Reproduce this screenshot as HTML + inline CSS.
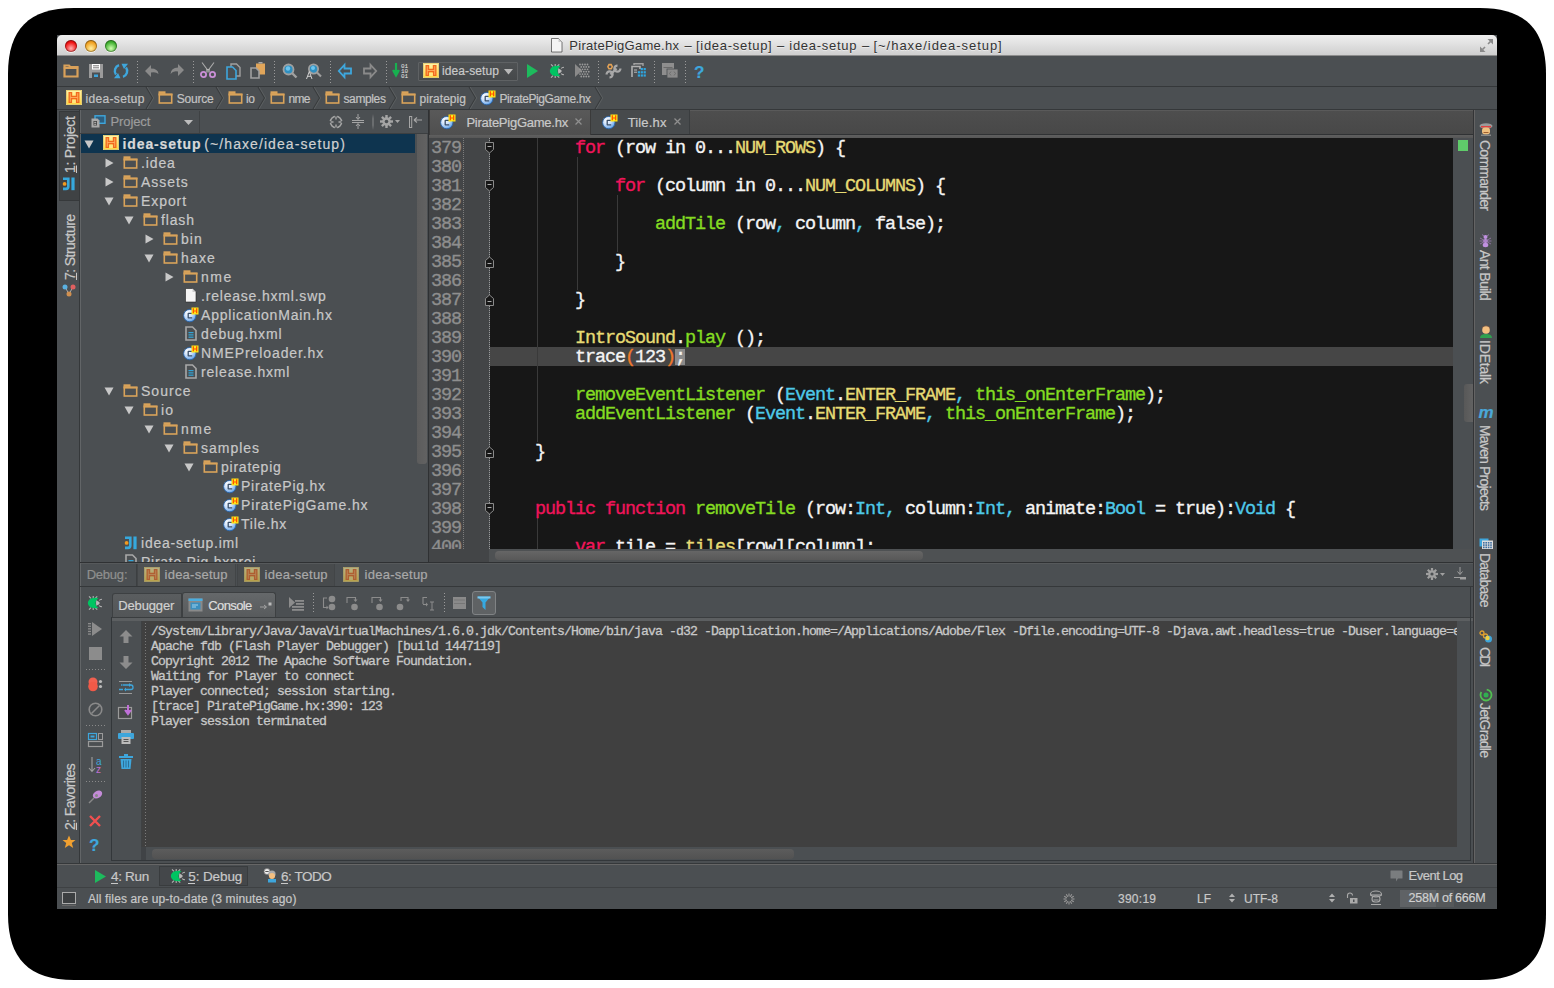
<!DOCTYPE html>
<html><head><meta charset="utf-8">
<style>
*{margin:0;padding:0;box-sizing:border-box}
html,body{width:1554px;height:988px;background:#fff;overflow:hidden;font-family:"Liberation Sans",sans-serif}
.a{position:absolute}
.t{white-space:pre;-webkit-text-stroke:0.2px currentColor}
svg.a{overflow:visible}
</style></head><body>
<svg class="a" style="left:0;top:0" width="1554" height="988"><path d="M74 8H1480C1524.9 8.0 1546.0 29.1 1546.0 74.0V914C1546.0 958.9 1524.9 980.0 1480.0 980.0H74C29.1 980.0 8.0 958.9 8.0 914.0V74C8.0 29.1 29.1 8.0 74.0 8.0Z" fill="#000"/></svg>
<div class="a" style="left:57px;top:35px;width:1440px;height:874px;background:#4b4f52"></div>
<div class="a" style="left:57px;top:35px;width:1440px;height:21px;background:linear-gradient(#efefef,#e2e2e2 40%,#cdcdcd);border-radius:5px 5px 0 0"></div>
<div class="a" style="left:57px;top:55px;width:1440px;height:1px;background:#8d8d8d"></div>
<div class="a" style="left:65px;top:40px;width:12px;height:12px;border-radius:50%;background:radial-gradient(circle at 50% 70%,#ffb0b0,#f01010 60%,#8a0a0a);box-shadow:0 1px 0 rgba(255,255,255,.6),inset 0 0 0 1px rgba(0,0,0,.3)"></div>
<div class="a" style="left:85px;top:40px;width:12px;height:12px;border-radius:50%;background:radial-gradient(circle at 50% 70%,#fff0a0,#f0a020 60%,#8a5a0a);box-shadow:0 1px 0 rgba(255,255,255,.6),inset 0 0 0 1px rgba(0,0,0,.3)"></div>
<div class="a" style="left:105px;top:40px;width:12px;height:12px;border-radius:50%;background:radial-gradient(circle at 50% 70%,#d0ffb0,#40b030 60%,#1a6a10);box-shadow:0 1px 0 rgba(255,255,255,.6),inset 0 0 0 1px rgba(0,0,0,.3)"></div>
<svg class="a" style="left:551px;top:38px" width="12" height="15" viewBox="0 0 12 15"><path d="M0.5 0.5H7.5L11 4V14H0.5z" fill="#f4f4f4" stroke="#222" stroke-width="0.6"/><path d="M7.5 0.5V4H11" fill="#ccc"/></svg>
<div class="a t " style="left:569.3px;top:38.19px;font:13px 'Liberation Sans';line-height:15.6px;color:#333333;letter-spacing:0.281px;-webkit-text-stroke:0;text-shadow:0 1px 0 rgba(255,255,255,.5)">PiratePigGame.hx</div>
<div class="a t " style="left:684.4px;top:38.19px;font:13px 'Liberation Sans';line-height:15.6px;color:#333333;letter-spacing:0.000px;-webkit-text-stroke:0;text-shadow:0 1px 0 rgba(255,255,255,.5)">–</div>
<div class="a t " style="left:696px;top:38.19px;font:13px 'Liberation Sans';line-height:15.6px;color:#333333;letter-spacing:0.706px;-webkit-text-stroke:0;text-shadow:0 1px 0 rgba(255,255,255,.5)">[idea-setup]</div>
<div class="a t " style="left:777px;top:38.19px;font:13px 'Liberation Sans';line-height:15.6px;color:#333333;letter-spacing:0.000px;-webkit-text-stroke:0;text-shadow:0 1px 0 rgba(255,255,255,.5)">–</div>
<div class="a t " style="left:789.3px;top:38.19px;font:13px 'Liberation Sans';line-height:15.6px;color:#333333;letter-spacing:0.721px;-webkit-text-stroke:0;text-shadow:0 1px 0 rgba(255,255,255,.5)">idea-setup</div>
<div class="a t " style="left:862px;top:38.19px;font:13px 'Liberation Sans';line-height:15.6px;color:#333333;letter-spacing:0.000px;-webkit-text-stroke:0;text-shadow:0 1px 0 rgba(255,255,255,.5)">–</div>
<div class="a t " style="left:873.5px;top:38.19px;font:13px 'Liberation Sans';line-height:15.6px;color:#333333;letter-spacing:0.959px;-webkit-text-stroke:0;text-shadow:0 1px 0 rgba(255,255,255,.5)">[~/haxe/idea-setup]</div>
<svg class="a" style="left:1479px;top:38px" width="15" height="15" viewBox="0 0 15 15"><path d="M8.5 1H14V6.5z" fill="#8a8a8a"/><path d="M11.5 3.5L9 6" stroke="#8a8a8a" stroke-width="1.6"/><path d="M1 8.5V14H6.5z" fill="#8a8a8a"/><path d="M3.5 11.5L6 9" stroke="#8a8a8a" stroke-width="1.6"/></svg>
<div class="a" style="left:57px;top:86px;width:1440px;height:1px;background:#35383a"></div>
<div class="a" style="left:57px;top:109px;width:1440px;height:1px;background:#35383a"></div>
<svg class="a" style="left:63px;top:64px" width="16" height="14" viewBox="0 0 16 14"><path d="M1.5 3V1.5H6l1.2 1.5H14.5V12.5H1.5z" fill="none" stroke="#d9a15a" stroke-width="2.2"/><rect x="0.8" y="3" width="14.4" height="2" fill="#d9a15a"/></svg>
<svg class="a" style="left:89px;top:64px" width="14" height="14" viewBox="0 0 14 14"><path d="M0 0H14V14H0z" fill="#9b9b9b"/><rect x="3" y="0" width="8" height="5.5" fill="#fff"/><rect x="4" y="1.3" width="6" height="1" fill="#777"/><rect x="4" y="3.3" width="6" height="1" fill="#777"/><rect x="3" y="8.5" width="8" height="5.5" fill="#4b4f52"/><rect x="5" y="10.5" width="4" height="2.5" fill="#3ea6dc"/></svg>
<svg class="a" style="left:113px;top:63px" width="16" height="16" viewBox="0 0 16 16"><path d="M3 11.5A6 6 0 0 1 6 2.2" fill="none" stroke="#3ea6dc" stroke-width="2.4"/><path d="M13 4.5A6 6 0 0 1 10 13.8" fill="none" stroke="#3ea6dc" stroke-width="2.4"/><path d="M8.5 0.8H15L11 6z" fill="#3ea6dc"/><path d="M7.5 15.2H1L5 10z" fill="#3ea6dc"/></svg>
<div class="a" style="left:137px;top:61px;width:1px;height:22px;background:repeating-linear-gradient(#9a9a9a 0 1px,transparent 1px 3px)"></div>
<svg class="a" style="left:145px;top:65px" width="14" height="12" viewBox="0 0 14 12"><path d="M0 6L6 0V3.5Q13 3.5 13.5 9Q11 6.5 6 7.5V12z" fill="#8a8a8a"/></svg>
<svg class="a" style="left:170px;top:64px" width="14" height="12" viewBox="0 0 14 12"><path d="M14 6L8 0V3.5Q1 3.5 0.5 10Q3 6.5 8 7.5V12z" fill="#8a8a8a"/></svg>
<div class="a" style="left:193px;top:61px;width:1px;height:22px;background:repeating-linear-gradient(#9a9a9a 0 1px,transparent 1px 3px)"></div>
<svg class="a" style="left:200px;top:62px" width="16" height="16" viewBox="0 0 16 16"><path d="M2 0.5L8 8.5L14 0.5" fill="none" stroke="#aaa" stroke-width="1.1"/><rect x="6.8" y="7.5" width="2.4" height="2.4" fill="none" stroke="#bbb" stroke-width="0.8"/><circle cx="3.5" cy="12.5" r="2.6" fill="none" stroke="#c98fd6" stroke-width="1.8"/><circle cx="12.5" cy="12.5" r="2.6" fill="none" stroke="#c98fd6" stroke-width="1.8"/></svg>
<svg class="a" style="left:226px;top:63px" width="15" height="17" viewBox="0 0 15 17"><path d="M5 1H10.5L14 4.5V13H5z" fill="none" stroke="#a0a0a0" stroke-width="1.4"/><path d="M1 4H6.5L10 7.5V16H1z" fill="#4b4f52" stroke="#3ea6dc" stroke-width="1.6"/></svg>
<svg class="a" style="left:250px;top:62px" width="16" height="17" viewBox="0 0 16 17"><rect x="6" y="1.5" width="9" height="11" fill="#e0a55a"/><rect x="8.5" y="0" width="4" height="1.5" fill="#aaa"/><path d="M1 6H6L9 9V16H1z" fill="#4b4f52" stroke="#a0a0a0" stroke-width="1.6"/></svg>
<div class="a" style="left:274px;top:61px;width:1px;height:22px;background:repeating-linear-gradient(#9a9a9a 0 1px,transparent 1px 3px)"></div>
<svg class="a" style="left:282px;top:63px" width="16" height="16" viewBox="0 0 16 16"><circle cx="6.5" cy="6.5" r="5" fill="#2f8fc0" stroke="#a0a0a0" stroke-width="1.8"/><circle cx="6" cy="5.5" r="2.2" fill="#6cc4ee"/><path d="M10 10L14.5 14.5" stroke="#a0a0a0" stroke-width="2.4"/></svg>
<svg class="a" style="left:306px;top:63px" width="16" height="16" viewBox="0 0 16 16"><circle cx="7.5" cy="6" r="4.6" fill="#2f8fc0" stroke="#a0a0a0" stroke-width="1.8"/><circle cx="7" cy="5" r="2" fill="#6cc4ee"/><path d="M11 9.5L15 13.5" stroke="#a0a0a0" stroke-width="2.2"/><path d="M0.5 16L3.3 8.5L6 16M1.5 13.3H5" stroke="#d0d0d0" stroke-width="1" fill="none"/></svg>
<div class="a" style="left:330px;top:61px;width:1px;height:22px;background:repeating-linear-gradient(#9a9a9a 0 1px,transparent 1px 3px)"></div>
<svg class="a" style="left:338px;top:64px" width="14" height="14" viewBox="0 0 14 14"><path d="M6.5 0.8L0.8 7L6.5 13.2V9.5H13V4.5H6.5z" fill="none" stroke="#3ea6dc" stroke-width="1.8"/></svg>
<svg class="a" style="left:363px;top:64px" width="14" height="14" viewBox="0 0 14 14"><path d="M7.5 0.8L13.2 7L7.5 13.2V9.5H1V4.5H7.5z" fill="none" stroke="#8a8a8a" stroke-width="1.8"/></svg>
<div class="a" style="left:386px;top:61px;width:1px;height:22px;background:repeating-linear-gradient(#9a9a9a 0 1px,transparent 1px 3px)"></div>
<svg class="a" style="left:393px;top:63px" width="17" height="15" viewBox="0 0 17 15"><path d="M3 0V9M0 7L3 12.5L6 7" stroke="#18b050" stroke-width="2.2" fill="#18b050"/><text x="8" y="4.5" font-family="Liberation Mono" font-size="6" fill="#e8e8e8">01</text><text x="8" y="9.5" font-family="Liberation Mono" font-size="6" fill="#e8e8e8">10</text><text x="8" y="14.5" font-family="Liberation Mono" font-size="6" fill="#e8e8e8">01</text></svg>
<div class="a" style="left:418px;top:62px;width:100px;height:19px;border:1px solid #5f6264;background:linear-gradient(#4e5153,#46494b);border-radius:1px"></div>
<svg class="a" style="left:423px;top:63px" width="16" height="15" viewBox="0 0 16 15"><defs><linearGradient id="hg" x1="0" y1="0" x2="0" y2="1"><stop offset="0" stop-color="#fff4a8"/><stop offset="1" stop-color="#ffd640"/></linearGradient></defs><rect x="0.4" y="0.4" width="15.2" height="14.2" fill="url(#hg)" stroke="#f0d878" stroke-width="0.8"/><path d="M2.5 2H6.2V5.8H9.8V2H13.5V13H9.8V9.2H6.2V13H2.5z" fill="#f26a1e"/><path d="M4.3 3.2V11.8M11.7 3.2V11.8M4.3 7.5H11.7" stroke="#ffb060" stroke-width="0.9"/><rect x="6.2" y="10" width="3.6" height="3" fill="#ffe680"/></svg>
<div class="a t " style="left:442px;top:64.14px;font:12px 'Liberation Sans';line-height:14.4px;color:#c9c9c9;letter-spacing:0.107px;">idea-setup</div>
<svg class="a" style="left:504px;top:69px" width="9" height="6" viewBox="0 0 9 6"><path d="M0 0H9L4.5 5.5z" fill="#b8b8b8"/></svg>
<svg class="a" style="left:527px;top:64px" width="11" height="14" viewBox="0 0 11 14"><path d="M0 0L11 7L0 14z" fill="#1dbb5d"/></svg>
<svg class="a" style="left:549px;top:63px" width="16" height="16" viewBox="0 0 16 16"><path d="M2 1.3L4 3.4M6.2 0.9V3M10.2 1.3L8.2 3.4M2 14.7L4 12.6M6.2 15.1V13M10.2 14.7L8.2 12.6" stroke="#b4b4b4" stroke-width="1.1"/><path d="M11.4 2.9Q6 2.4 3 4Q0.8 5.8 0.8 8Q0.8 10.3 3 12Q6 13.6 11.4 13.1Q8.4 10.8 8.4 8Q8.4 5.2 11.4 2.9z" fill="#00c462"/><path d="M9.3 5.2Q12.4 6.6 12.9 8Q12.4 9.4 9.3 10.8Q8.7 8 9.3 5.2z" fill="#b8b8b8"/><path d="M12.3 5.6Q12.9 4.3 15 4.3M12.3 10.4Q12.9 11.7 15 11.7" fill="none" stroke="#b4b4b4" stroke-width="1.1"/></svg>
<svg class="a" style="left:575px;top:63px" width="15" height="15" viewBox="0 0 15 15"><path d="M0 1L7 7.5L0 14z" fill="#8a8a8a"/><circle cx="5.0" cy="1.5" r="0.9" fill="#9a9a9a"/><circle cx="7.5" cy="1.5" r="0.9" fill="#9a9a9a"/><circle cx="10.0" cy="1.5" r="0.9" fill="#9a9a9a"/><circle cx="12.5" cy="1.5" r="0.9" fill="#9a9a9a"/><circle cx="6.25" cy="3.9" r="0.9" fill="#9a9a9a"/><circle cx="8.75" cy="3.9" r="0.9" fill="#9a9a9a"/><circle cx="11.25" cy="3.9" r="0.9" fill="#9a9a9a"/><circle cx="13.75" cy="3.9" r="0.9" fill="#9a9a9a"/><circle cx="5.0" cy="6.3" r="0.9" fill="#9a9a9a"/><circle cx="7.5" cy="6.3" r="0.9" fill="#9a9a9a"/><circle cx="10.0" cy="6.3" r="0.9" fill="#9a9a9a"/><circle cx="12.5" cy="6.3" r="0.9" fill="#9a9a9a"/><circle cx="6.25" cy="8.7" r="0.9" fill="#9a9a9a"/><circle cx="8.75" cy="8.7" r="0.9" fill="#9a9a9a"/><circle cx="11.25" cy="8.7" r="0.9" fill="#9a9a9a"/><circle cx="13.75" cy="8.7" r="0.9" fill="#9a9a9a"/><circle cx="5.0" cy="11.1" r="0.9" fill="#9a9a9a"/><circle cx="7.5" cy="11.1" r="0.9" fill="#9a9a9a"/><circle cx="10.0" cy="11.1" r="0.9" fill="#9a9a9a"/><circle cx="12.5" cy="11.1" r="0.9" fill="#9a9a9a"/><circle cx="6.25" cy="13.5" r="0.9" fill="#9a9a9a"/><circle cx="8.75" cy="13.5" r="0.9" fill="#9a9a9a"/><circle cx="11.25" cy="13.5" r="0.9" fill="#9a9a9a"/><circle cx="13.75" cy="13.5" r="0.9" fill="#9a9a9a"/></svg>
<div class="a" style="left:598px;top:61px;width:1px;height:22px;background:repeating-linear-gradient(#9a9a9a 0 1px,transparent 1px 3px)"></div>
<svg class="a" style="left:605px;top:63px" width="17" height="17" viewBox="0 0 17 17"><path d="M3.5 0.8L6.6 0.8L8.1 3.7L6.6 6.6H3.5L2 3.7z" fill="#e4a255"/><circle cx="5.05" cy="3.7" r="1.3" fill="#4b4f52"/><path d="M5.5 11.5L11.5 5.5" stroke="#a8a8a8" stroke-width="2.4"/><path d="M15.4 5.5A3 3 0 1 1 12.5 2.6" fill="none" stroke="#a8a8a8" stroke-width="2.3"/><path d="M1.6 11.5A3 3 0 1 1 4.5 14.4" fill="none" stroke="#a8a8a8" stroke-width="2.3"/></svg>
<svg class="a" style="left:631px;top:63px" width="15" height="15" viewBox="0 0 15 15"><path d="M3 2V0.8H12V3" fill="none" stroke="#a0a0a0" stroke-width="1.4"/><path d="M1 14V3.5H9V6" fill="none" stroke="#b0b0b0" stroke-width="1.6"/><rect x="3" y="6.5" width="3" height="1" fill="#bbb"/><rect x="3" y="8.7" width="3" height="1" fill="#bbb"/><rect x="6.8" y="8.2" width="2.2" height="2.2" fill="#2ea6e0"/><rect x="6.8" y="11.4" width="2.2" height="2.2" fill="#2ea6e0"/><rect x="9.7" y="5.0" width="2.2" height="2.2" fill="#2ea6e0"/><rect x="9.7" y="8.2" width="2.2" height="2.2" fill="#2ea6e0"/><rect x="9.7" y="11.4" width="2.2" height="2.2" fill="#2ea6e0"/><rect x="12.6" y="5.0" width="2.2" height="2.2" fill="#2ea6e0"/><rect x="12.6" y="8.2" width="2.2" height="2.2" fill="#2ea6e0"/><rect x="12.6" y="11.4" width="2.2" height="2.2" fill="#2ea6e0"/></svg>
<div class="a" style="left:654px;top:61px;width:1px;height:22px;background:repeating-linear-gradient(#9a9a9a 0 1px,transparent 1px 3px)"></div>
<svg class="a" style="left:662px;top:63px" width="16" height="16" viewBox="0 0 16 16"><rect x="0" y="0" width="12" height="12" fill="#8e8e8e"/><rect x="1.5" y="4" width="9" height="1" fill="#6a6a6a"/><rect x="5" y="6" width="11" height="9" fill="#8a8a8a" stroke="#4b4f52" stroke-width="0.8"/><path d="M9 8.5L7.5 10.5L9 12.5M12 8.5L13.5 10.5L12 12.5" stroke="#666" stroke-width="0.8" fill="none"/></svg>
<div class="a" style="left:685px;top:61px;width:1px;height:22px;background:repeating-linear-gradient(#9a9a9a 0 1px,transparent 1px 3px)"></div>
<div class="a t " style="left:694px;top:62.91px;font:bold 17px 'Liberation Sans';line-height:20.4px;color:#3ea6dc;letter-spacing:0.000px;">?</div>
<svg class="a" style="left:66px;top:90px" width="16" height="15" viewBox="0 0 16 15"><defs><linearGradient id="hg" x1="0" y1="0" x2="0" y2="1"><stop offset="0" stop-color="#fff4a8"/><stop offset="1" stop-color="#ffd640"/></linearGradient></defs><rect x="0.4" y="0.4" width="15.2" height="14.2" fill="url(#hg)" stroke="#f0d878" stroke-width="0.8"/><path d="M2.5 2H6.2V5.8H9.8V2H13.5V13H9.8V9.2H6.2V13H2.5z" fill="#f26a1e"/><path d="M4.3 3.2V11.8M11.7 3.2V11.8M4.3 7.5H11.7" stroke="#ffb060" stroke-width="0.9"/><rect x="6.2" y="10" width="3.6" height="3" fill="#ffe680"/></svg>
<div class="a t " style="left:85.5px;top:91.84px;font:12px 'Liberation Sans';line-height:14.4px;color:#c3c3c3;letter-spacing:0.329px;">idea-setup</div>
<svg class="a" style="left:146px;top:87px" width="8" height="22" viewBox="0 0 8 22"><path d="M0 0L6.5 11L0 22" fill="none" stroke="#393c3e" stroke-width="1.1"/><path d="M1.2 0L7.7 11L1.2 22" fill="none" stroke="#606365" stroke-width="0.8"/></svg>
<svg class="a" style="left:158px;top:91px" width="15" height="13" viewBox="0 0 15 13"><rect x="0.5" y="0.3" width="7" height="2.6" fill="#d9a35a"/><rect x="1.3" y="3.4" width="12.4" height="8.6" fill="none" stroke="#d9a35a" stroke-width="1.6"/><rect x="0.5" y="2.6" width="14" height="1.9" fill="#d9a35a"/></svg>
<div class="a t " style="left:176.8px;top:91.84px;font:12px 'Liberation Sans';line-height:14.4px;color:#c3c3c3;letter-spacing:-0.204px;">Source</div>
<svg class="a" style="left:215.5px;top:87px" width="8" height="22" viewBox="0 0 8 22"><path d="M0 0L6.5 11L0 22" fill="none" stroke="#393c3e" stroke-width="1.1"/><path d="M1.2 0L7.7 11L1.2 22" fill="none" stroke="#606365" stroke-width="0.8"/></svg>
<svg class="a" style="left:228px;top:91px" width="15" height="13" viewBox="0 0 15 13"><rect x="0.5" y="0.3" width="7" height="2.6" fill="#d9a35a"/><rect x="1.3" y="3.4" width="12.4" height="8.6" fill="none" stroke="#d9a35a" stroke-width="1.6"/><rect x="0.5" y="2.6" width="14" height="1.9" fill="#d9a35a"/></svg>
<div class="a t " style="left:246px;top:91.84px;font:12px 'Liberation Sans';line-height:14.4px;color:#c3c3c3;letter-spacing:-0.340px;">io</div>
<svg class="a" style="left:257.5px;top:87px" width="8" height="22" viewBox="0 0 8 22"><path d="M0 0L6.5 11L0 22" fill="none" stroke="#393c3e" stroke-width="1.1"/><path d="M1.2 0L7.7 11L1.2 22" fill="none" stroke="#606365" stroke-width="0.8"/></svg>
<svg class="a" style="left:270px;top:91px" width="15" height="13" viewBox="0 0 15 13"><rect x="0.5" y="0.3" width="7" height="2.6" fill="#d9a35a"/><rect x="1.3" y="3.4" width="12.4" height="8.6" fill="none" stroke="#d9a35a" stroke-width="1.6"/><rect x="0.5" y="2.6" width="14" height="1.9" fill="#d9a35a"/></svg>
<div class="a t " style="left:288.5px;top:91.84px;font:12px 'Liberation Sans';line-height:14.4px;color:#c3c3c3;letter-spacing:-0.672px;">nme</div>
<svg class="a" style="left:312.5px;top:87px" width="8" height="22" viewBox="0 0 8 22"><path d="M0 0L6.5 11L0 22" fill="none" stroke="#393c3e" stroke-width="1.1"/><path d="M1.2 0L7.7 11L1.2 22" fill="none" stroke="#606365" stroke-width="0.8"/></svg>
<svg class="a" style="left:325px;top:91px" width="15" height="13" viewBox="0 0 15 13"><rect x="0.5" y="0.3" width="7" height="2.6" fill="#d9a35a"/><rect x="1.3" y="3.4" width="12.4" height="8.6" fill="none" stroke="#d9a35a" stroke-width="1.6"/><rect x="0.5" y="2.6" width="14" height="1.9" fill="#d9a35a"/></svg>
<div class="a t " style="left:343.5px;top:91.84px;font:12px 'Liberation Sans';line-height:14.4px;color:#c3c3c3;letter-spacing:-0.381px;">samples</div>
<svg class="a" style="left:388.5px;top:87px" width="8" height="22" viewBox="0 0 8 22"><path d="M0 0L6.5 11L0 22" fill="none" stroke="#393c3e" stroke-width="1.1"/><path d="M1.2 0L7.7 11L1.2 22" fill="none" stroke="#606365" stroke-width="0.8"/></svg>
<svg class="a" style="left:401px;top:91px" width="15" height="13" viewBox="0 0 15 13"><rect x="0.5" y="0.3" width="7" height="2.6" fill="#d9a35a"/><rect x="1.3" y="3.4" width="12.4" height="8.6" fill="none" stroke="#d9a35a" stroke-width="1.6"/><rect x="0.5" y="2.6" width="14" height="1.9" fill="#d9a35a"/></svg>
<div class="a t " style="left:419.5px;top:91.84px;font:12px 'Liberation Sans';line-height:14.4px;color:#c3c3c3;letter-spacing:0.059px;">piratepig</div>
<svg class="a" style="left:468.5px;top:87px" width="8" height="22" viewBox="0 0 8 22"><path d="M0 0L6.5 11L0 22" fill="none" stroke="#393c3e" stroke-width="1.1"/><path d="M1.2 0L7.7 11L1.2 22" fill="none" stroke="#606365" stroke-width="0.8"/></svg>
<svg class="a" style="left:480px;top:90px" width="16" height="15" viewBox="0 0 16 15"><defs><radialGradient id="cg" cx="0.35" cy="0.3" r="0.75"><stop offset="0" stop-color="#ffffff"/><stop offset="0.5" stop-color="#c8defa"/><stop offset="1" stop-color="#5a9ee8"/></radialGradient></defs><circle cx="6.8" cy="8.6" r="6.2" fill="url(#cg)" stroke="#2a64a8" stroke-width="0.9"/><path d="M9.2 6.4H5.2V10.8H9.2" fill="none" stroke="#3a4f6a" stroke-width="1.3" stroke-linejoin="round"/><rect x="8.5" y="0.5" width="7" height="7" fill="#ffe818"/><path d="M9.7 1.3h1.3v2.2h2V1.3h1.3v5H13V4.6h-2V6.3H9.7z" fill="#ff5500"/></svg>
<div class="a t " style="left:499.4px;top:91.84px;font:12px 'Liberation Sans';line-height:14.4px;color:#c3c3c3;letter-spacing:-0.385px;">PiratePigGame.hx</div>
<svg class="a" style="left:594.5px;top:87px" width="8" height="22" viewBox="0 0 8 22"><path d="M0 0L6.5 11L0 22" fill="none" stroke="#393c3e" stroke-width="1.1"/><path d="M1.2 0L7.7 11L1.2 22" fill="none" stroke="#606365" stroke-width="0.8"/></svg>
<div class="a" style="left:79px;top:110px;width:1px;height:753px;background:#35383a"></div>
<div class="a" style="left:80px;top:110px;width:1px;height:753px;background:#626567"></div>
<div class="a" style="left:59px;top:111px;width:20px;height:90px;background:#3f4244;border:1px solid #36393b;border-right:none"></div>
<div class="a t" style="left:62.4px;top:173.0px;font:14px 'Liberation Sans';line-height:16.8px;color:#c8c8c8;letter-spacing:-0.238px;transform-origin:0 0;transform:rotate(-90deg)"><u>1</u>: Project</div>
<svg class="a" style="left:62px;top:177px" width="14" height="14" viewBox="0 0 14 14"><path d="M1 0.5H7.6V9.6Q7.6 13.2 4 13.2H1V10.6H4Q5 10.6 5 9.6V3.1H1z" fill="#36a8dc"/><circle cx="2.6" cy="6.9" r="1.9" fill="#f09a20"/><rect x="9.4" y="0.5" width="3.2" height="12.7" fill="#36a8dc"/></svg>
<div class="a t" style="left:62.4px;top:280.0px;font:14px 'Liberation Sans';line-height:16.8px;color:#c8c8c8;letter-spacing:-0.579px;transform-origin:0 0;transform:rotate(-90deg)"><u>7</u>: Structure</div>
<svg class="a" style="left:62px;top:284px" width="14" height="13" viewBox="0 0 14 13"><path d="M3 3L7 10L11 3" stroke="#aaa" stroke-width="1" fill="none"/><circle cx="3" cy="3" r="2.5" fill="#5ab0e0"/><circle cx="11" cy="3" r="2.5" fill="#e06060"/><circle cx="7" cy="10" r="2.5" fill="#d09050"/></svg>
<div class="a t" style="left:62.4px;top:830.3px;font:14px 'Liberation Sans';line-height:16.8px;color:#c8c8c8;letter-spacing:-0.576px;transform-origin:0 0;transform:rotate(-90deg)"><u>2</u>: Favorites</div>
<svg class="a" style="left:62px;top:835px" width="14" height="14" viewBox="0 0 14 14"><path d="M7 0.5L8.9 5H13.5L9.8 8L11.2 13L7 10.2L2.8 13L4.2 8L0.5 5H5.1z" fill="#f0a030"/></svg>
<div class="a" style="left:80px;top:133px;width:348px;height:1px;background:#3c3f41"></div>
<svg class="a" style="left:91px;top:115px" width="15" height="13" viewBox="0 0 15 13"><rect x="4" y="0.8" width="10" height="7.5" fill="#2d5f80" stroke="#3ea6dc" stroke-width="1.4"/><path d="M0.5 3.5H6.5L8.5 5.5V12.5H0.5z" fill="#aaa"/><rect x="2.5" y="6" width="3.5" height="4.5" fill="#444"/><rect x="3.2" y="6.8" width="2" height="1.2" fill="#aaa"/><rect x="3.2" y="8.7" width="2" height="1.2" fill="#aaa"/></svg>
<div class="a t " style="left:110.4px;top:113.69px;font:13px 'Liberation Sans';line-height:15.6px;color:#9c9c9c;letter-spacing:-0.077px;">Project</div>
<svg class="a" style="left:184px;top:120px" width="9" height="5" viewBox="0 0 9 5"><path d="M0 0H9L4.5 5z" fill="#bdbdbd"/></svg>
<div class="a" style="left:199px;top:111px;width:1px;height:22px;background:#3f4244"></div>
<svg class="a" style="left:329px;top:115px" width="14" height="14" viewBox="0 0 14 14"><circle cx="7" cy="7" r="5.6" fill="none" stroke="#a5a5a5" stroke-width="1.6"/><path d="M7 0V4M7 10V14M0 7H4M10 7H14" stroke="#4b4f52" stroke-width="2.2"/><path d="M7 1.5V4.5M7 9.5V12.5M1.5 7H4.5M9.5 7H12.5" stroke="#a5a5a5" stroke-width="1.4"/></svg>
<svg class="a" style="left:352px;top:114px" width="12" height="15" viewBox="0 0 12 15"><path d="M0 6.5H12M0 8.5H12" stroke="#a5a5a5" stroke-width="1"/><path d="M6 0V5M4 3L6 5.5L8 3M6 15V10M4 12L6 9.5L8 12" stroke="#a5a5a5" stroke-width="1" fill="none"/></svg>
<div class="a" style="left:372px;top:114px;width:2px;height:16px;background:linear-gradient(transparent,#6a6d6f 30%,#6a6d6f 70%,transparent)"></div>
<svg class="a" style="left:380px;top:115px" width="21" height="13" viewBox="0 0 21 13"><g transform="translate(6.5 6.5)"><circle r="4.2" fill="#a5a5a5"/><circle r="1.8" fill="#4b4f52"/><rect x="-1.2" y="-6.5" width="2.4" height="3" fill="#a5a5a5" transform="rotate(0)"/><rect x="-1.2" y="-6.5" width="2.4" height="3" fill="#a5a5a5" transform="rotate(45)"/><rect x="-1.2" y="-6.5" width="2.4" height="3" fill="#a5a5a5" transform="rotate(90)"/><rect x="-1.2" y="-6.5" width="2.4" height="3" fill="#a5a5a5" transform="rotate(135)"/><rect x="-1.2" y="-6.5" width="2.4" height="3" fill="#a5a5a5" transform="rotate(180)"/><rect x="-1.2" y="-6.5" width="2.4" height="3" fill="#a5a5a5" transform="rotate(225)"/><rect x="-1.2" y="-6.5" width="2.4" height="3" fill="#a5a5a5" transform="rotate(270)"/><rect x="-1.2" y="-6.5" width="2.4" height="3" fill="#a5a5a5" transform="rotate(315)"/></g><path d="M15 5H20L17.5 8z" fill="#a5a5a5"/></svg>
<svg class="a" style="left:409px;top:116px" width="13" height="12" viewBox="0 0 13 12"><rect x="0.5" y="0.5" width="2.2" height="11" fill="none" stroke="#a5a5a5" stroke-width="1"/><path d="M5 4H13M5 4L8 1.5M5 4L8 6.5" stroke="#a5a5a5" stroke-width="1.1" fill="none"/></svg>
<div class="a" style="left:428px;top:110px;width:1px;height:452px;background:#2f3133"></div>
<div class="a" style="left:415px;top:134px;width:13px;height:427px;background:#4b4f52"></div>
<div class="a" style="left:417px;top:134px;width:10px;height:330px;border-radius:0 0 3px 3px;background:linear-gradient(90deg,#5c5c5c,#626262)"></div>
<div class="a" style="left:81px;top:134px;width:334px;height:19px;background:#0e344f"></div>
<svg class="a" style="left:84px;top:140px" width="10" height="9" viewBox="0 0 10 9"><path d="M0.5 0.5H9.5L5 8.5z" fill="#c8c8c8"/></svg>
<svg class="a" style="left:103px;top:135px" width="16" height="15" viewBox="0 0 16 15"><defs><linearGradient id="hg" x1="0" y1="0" x2="0" y2="1"><stop offset="0" stop-color="#fff4a8"/><stop offset="1" stop-color="#ffd640"/></linearGradient></defs><rect x="0.4" y="0.4" width="15.2" height="14.2" fill="url(#hg)" stroke="#f0d878" stroke-width="0.8"/><path d="M2.5 2H6.2V5.8H9.8V2H13.5V13H9.8V9.2H6.2V13H2.5z" fill="#f26a1e"/><path d="M4.3 3.2V11.8M11.7 3.2V11.8M4.3 7.5H11.7" stroke="#ffb060" stroke-width="0.9"/><rect x="6.2" y="10" width="3.6" height="3" fill="#ffe680"/></svg>
<div class="a t " style="left:122.5px;top:135.75px;font:bold 14px 'Liberation Sans';line-height:16.8px;color:#d8d8d8;letter-spacing:0.887px;">idea-setup</div>
<div class="a t " style="left:204.3px;top:135.75px;font:14px 'Liberation Sans';line-height:16.8px;color:#d0d0d0;letter-spacing:1.082px;">(~/haxe/idea-setup)</div>
<svg class="a" style="left:105px;top:158px" width="9" height="10" viewBox="0 0 9 10"><path d="M0.5 0.5L8.5 5L0.5 9.5z" fill="#c8c8c8"/></svg>
<svg class="a" style="left:123px;top:156px" width="15" height="13" viewBox="0 0 15 13"><rect x="0.5" y="0.3" width="7" height="2.6" fill="#d9a35a"/><rect x="1.3" y="3.4" width="12.4" height="8.6" fill="none" stroke="#d9a35a" stroke-width="1.6"/><rect x="0.5" y="2.6" width="14" height="1.9" fill="#d9a35a"/></svg>
<div class="a t " style="left:141px;top:154.75px;font:14px 'Liberation Sans';line-height:16.8px;color:#c8c8c8;letter-spacing:0.867px;">.idea</div>
<svg class="a" style="left:105px;top:177px" width="9" height="10" viewBox="0 0 9 10"><path d="M0.5 0.5L8.5 5L0.5 9.5z" fill="#c8c8c8"/></svg>
<svg class="a" style="left:123px;top:175px" width="15" height="13" viewBox="0 0 15 13"><rect x="0.5" y="0.3" width="7" height="2.6" fill="#d9a35a"/><rect x="1.3" y="3.4" width="12.4" height="8.6" fill="none" stroke="#d9a35a" stroke-width="1.6"/><rect x="0.5" y="2.6" width="14" height="1.9" fill="#d9a35a"/></svg>
<div class="a t " style="left:141px;top:173.75px;font:14px 'Liberation Sans';line-height:16.8px;color:#c8c8c8;letter-spacing:0.960px;">Assets</div>
<svg class="a" style="left:104px;top:197px" width="10" height="9" viewBox="0 0 10 9"><path d="M0.5 0.5H9.5L5 8.5z" fill="#c8c8c8"/></svg>
<svg class="a" style="left:123px;top:194px" width="15" height="13" viewBox="0 0 15 13"><rect x="0.5" y="0.3" width="7" height="2.6" fill="#d9a35a"/><rect x="1.3" y="3.4" width="12.4" height="8.6" fill="none" stroke="#d9a35a" stroke-width="1.6"/><rect x="0.5" y="2.6" width="14" height="1.9" fill="#d9a35a"/></svg>
<div class="a t " style="left:141px;top:192.75px;font:14px 'Liberation Sans';line-height:16.8px;color:#c8c8c8;letter-spacing:0.925px;">Export</div>
<svg class="a" style="left:124px;top:216px" width="10" height="9" viewBox="0 0 10 9"><path d="M0.5 0.5H9.5L5 8.5z" fill="#c8c8c8"/></svg>
<svg class="a" style="left:143px;top:213px" width="15" height="13" viewBox="0 0 15 13"><rect x="0.5" y="0.3" width="7" height="2.6" fill="#d9a35a"/><rect x="1.3" y="3.4" width="12.4" height="8.6" fill="none" stroke="#d9a35a" stroke-width="1.6"/><rect x="0.5" y="2.6" width="14" height="1.9" fill="#d9a35a"/></svg>
<div class="a t " style="left:161px;top:211.75px;font:14px 'Liberation Sans';line-height:16.8px;color:#c8c8c8;letter-spacing:0.845px;">flash</div>
<svg class="a" style="left:145px;top:234px" width="9" height="10" viewBox="0 0 9 10"><path d="M0.5 0.5L8.5 5L0.5 9.5z" fill="#c8c8c8"/></svg>
<svg class="a" style="left:163px;top:232px" width="15" height="13" viewBox="0 0 15 13"><rect x="0.5" y="0.3" width="7" height="2.6" fill="#d9a35a"/><rect x="1.3" y="3.4" width="12.4" height="8.6" fill="none" stroke="#d9a35a" stroke-width="1.6"/><rect x="0.5" y="2.6" width="14" height="1.9" fill="#d9a35a"/></svg>
<div class="a t " style="left:181px;top:230.75px;font:14px 'Liberation Sans';line-height:16.8px;color:#c8c8c8;letter-spacing:1.068px;">bin</div>
<svg class="a" style="left:144px;top:254px" width="10" height="9" viewBox="0 0 10 9"><path d="M0.5 0.5H9.5L5 8.5z" fill="#c8c8c8"/></svg>
<svg class="a" style="left:163px;top:251px" width="15" height="13" viewBox="0 0 15 13"><rect x="0.5" y="0.3" width="7" height="2.6" fill="#d9a35a"/><rect x="1.3" y="3.4" width="12.4" height="8.6" fill="none" stroke="#d9a35a" stroke-width="1.6"/><rect x="0.5" y="2.6" width="14" height="1.9" fill="#d9a35a"/></svg>
<div class="a t " style="left:181px;top:249.75px;font:14px 'Liberation Sans';line-height:16.8px;color:#c8c8c8;letter-spacing:1.157px;">haxe</div>
<svg class="a" style="left:165px;top:272px" width="9" height="10" viewBox="0 0 9 10"><path d="M0.5 0.5L8.5 5L0.5 9.5z" fill="#c8c8c8"/></svg>
<svg class="a" style="left:183px;top:270px" width="15" height="13" viewBox="0 0 15 13"><rect x="0.5" y="0.3" width="7" height="2.6" fill="#d9a35a"/><rect x="1.3" y="3.4" width="12.4" height="8.6" fill="none" stroke="#d9a35a" stroke-width="1.6"/><rect x="0.5" y="2.6" width="14" height="1.9" fill="#d9a35a"/></svg>
<div class="a t " style="left:201px;top:268.75px;font:14px 'Liberation Sans';line-height:16.8px;color:#c8c8c8;letter-spacing:1.556px;">nme</div>
<svg class="a" style="left:185px;top:288px" width="12" height="15" viewBox="0 0 12 15"><path d="M0.5 0.5H7.5L11 4V14H0.5z" fill="#f4f4f4" stroke="#222" stroke-width="0.6"/><path d="M7.5 0.5V4H11" fill="#ccc"/></svg>
<div class="a t " style="left:201px;top:287.75px;font:14px 'Liberation Sans';line-height:16.8px;color:#c8c8c8;letter-spacing:0.800px;">.release.hxml.swp</div>
<svg class="a" style="left:183px;top:307px" width="16" height="15" viewBox="0 0 16 15"><defs><radialGradient id="cg" cx="0.35" cy="0.3" r="0.75"><stop offset="0" stop-color="#ffffff"/><stop offset="0.5" stop-color="#c8defa"/><stop offset="1" stop-color="#5a9ee8"/></radialGradient></defs><circle cx="6.8" cy="8.6" r="6.2" fill="url(#cg)" stroke="#2a64a8" stroke-width="0.9"/><path d="M9.2 6.4H5.2V10.8H9.2" fill="none" stroke="#3a4f6a" stroke-width="1.3" stroke-linejoin="round"/><rect x="8.5" y="0.5" width="7" height="7" fill="#ffe818"/><path d="M9.7 1.3h1.3v2.2h2V1.3h1.3v5H13V4.6h-2V6.3H9.7z" fill="#ff5500"/></svg>
<div class="a t " style="left:201px;top:306.75px;font:14px 'Liberation Sans';line-height:16.8px;color:#c8c8c8;letter-spacing:0.790px;">ApplicationMain.hx</div>
<svg class="a" style="left:185px;top:326px" width="12" height="15" viewBox="0 0 12 15"><path d="M1 1H7.5L11 4.5V14H1z" fill="none" stroke="#a8a8a8" stroke-width="1.6"/><rect x="3.5" y="6" width="5" height="1.2" fill="#33a5d8"/><rect x="3.5" y="8.3" width="5" height="1.2" fill="#33a5d8"/><rect x="3.5" y="10.6" width="5" height="1.2" fill="#33a5d8"/></svg>
<div class="a t " style="left:201px;top:325.75px;font:14px 'Liberation Sans';line-height:16.8px;color:#c8c8c8;letter-spacing:0.919px;">debug.hxml</div>
<svg class="a" style="left:183px;top:345px" width="16" height="15" viewBox="0 0 16 15"><defs><radialGradient id="cg" cx="0.35" cy="0.3" r="0.75"><stop offset="0" stop-color="#ffffff"/><stop offset="0.5" stop-color="#c8defa"/><stop offset="1" stop-color="#5a9ee8"/></radialGradient></defs><circle cx="6.8" cy="8.6" r="6.2" fill="url(#cg)" stroke="#2a64a8" stroke-width="0.9"/><path d="M9.2 6.4H5.2V10.8H9.2" fill="none" stroke="#3a4f6a" stroke-width="1.3" stroke-linejoin="round"/><rect x="8.5" y="0.5" width="7" height="7" fill="#ffe818"/><path d="M9.7 1.3h1.3v2.2h2V1.3h1.3v5H13V4.6h-2V6.3H9.7z" fill="#ff5500"/></svg>
<div class="a t " style="left:201px;top:344.75px;font:14px 'Liberation Sans';line-height:16.8px;color:#c8c8c8;letter-spacing:0.896px;">NMEPreloader.hx</div>
<svg class="a" style="left:185px;top:364px" width="12" height="15" viewBox="0 0 12 15"><path d="M1 1H7.5L11 4.5V14H1z" fill="none" stroke="#a8a8a8" stroke-width="1.6"/><rect x="3.5" y="6" width="5" height="1.2" fill="#33a5d8"/><rect x="3.5" y="8.3" width="5" height="1.2" fill="#33a5d8"/><rect x="3.5" y="10.6" width="5" height="1.2" fill="#33a5d8"/></svg>
<div class="a t " style="left:201px;top:363.75px;font:14px 'Liberation Sans';line-height:16.8px;color:#c8c8c8;letter-spacing:0.825px;">release.hxml</div>
<svg class="a" style="left:104px;top:387px" width="10" height="9" viewBox="0 0 10 9"><path d="M0.5 0.5H9.5L5 8.5z" fill="#c8c8c8"/></svg>
<svg class="a" style="left:123px;top:384px" width="15" height="13" viewBox="0 0 15 13"><rect x="0.5" y="0.3" width="7" height="2.6" fill="#d9a35a"/><rect x="1.3" y="3.4" width="12.4" height="8.6" fill="none" stroke="#d9a35a" stroke-width="1.6"/><rect x="0.5" y="2.6" width="14" height="1.9" fill="#d9a35a"/></svg>
<div class="a t " style="left:141px;top:382.75px;font:14px 'Liberation Sans';line-height:16.8px;color:#c8c8c8;letter-spacing:1.014px;">Source</div>
<svg class="a" style="left:124px;top:406px" width="10" height="9" viewBox="0 0 10 9"><path d="M0.5 0.5H9.5L5 8.5z" fill="#c8c8c8"/></svg>
<svg class="a" style="left:143px;top:403px" width="15" height="13" viewBox="0 0 15 13"><rect x="0.5" y="0.3" width="7" height="2.6" fill="#d9a35a"/><rect x="1.3" y="3.4" width="12.4" height="8.6" fill="none" stroke="#d9a35a" stroke-width="1.6"/><rect x="0.5" y="2.6" width="14" height="1.9" fill="#d9a35a"/></svg>
<div class="a t " style="left:161px;top:401.75px;font:14px 'Liberation Sans';line-height:16.8px;color:#c8c8c8;letter-spacing:1.245px;">io</div>
<svg class="a" style="left:144px;top:425px" width="10" height="9" viewBox="0 0 10 9"><path d="M0.5 0.5H9.5L5 8.5z" fill="#c8c8c8"/></svg>
<svg class="a" style="left:163px;top:422px" width="15" height="13" viewBox="0 0 15 13"><rect x="0.5" y="0.3" width="7" height="2.6" fill="#d9a35a"/><rect x="1.3" y="3.4" width="12.4" height="8.6" fill="none" stroke="#d9a35a" stroke-width="1.6"/><rect x="0.5" y="2.6" width="14" height="1.9" fill="#d9a35a"/></svg>
<div class="a t " style="left:181px;top:420.75px;font:14px 'Liberation Sans';line-height:16.8px;color:#c8c8c8;letter-spacing:1.556px;">nme</div>
<svg class="a" style="left:164px;top:444px" width="10" height="9" viewBox="0 0 10 9"><path d="M0.5 0.5H9.5L5 8.5z" fill="#c8c8c8"/></svg>
<svg class="a" style="left:183px;top:441px" width="15" height="13" viewBox="0 0 15 13"><rect x="0.5" y="0.3" width="7" height="2.6" fill="#d9a35a"/><rect x="1.3" y="3.4" width="12.4" height="8.6" fill="none" stroke="#d9a35a" stroke-width="1.6"/><rect x="0.5" y="2.6" width="14" height="1.9" fill="#d9a35a"/></svg>
<div class="a t " style="left:201px;top:439.75px;font:14px 'Liberation Sans';line-height:16.8px;color:#c8c8c8;letter-spacing:0.993px;">samples</div>
<svg class="a" style="left:184px;top:463px" width="10" height="9" viewBox="0 0 10 9"><path d="M0.5 0.5H9.5L5 8.5z" fill="#c8c8c8"/></svg>
<svg class="a" style="left:203px;top:460px" width="15" height="13" viewBox="0 0 15 13"><rect x="0.5" y="0.3" width="7" height="2.6" fill="#d9a35a"/><rect x="1.3" y="3.4" width="12.4" height="8.6" fill="none" stroke="#d9a35a" stroke-width="1.6"/><rect x="0.5" y="2.6" width="14" height="1.9" fill="#d9a35a"/></svg>
<div class="a t " style="left:221px;top:458.75px;font:14px 'Liberation Sans';line-height:16.8px;color:#c8c8c8;letter-spacing:0.767px;">piratepig</div>
<svg class="a" style="left:223px;top:478px" width="16" height="15" viewBox="0 0 16 15"><defs><radialGradient id="cg" cx="0.35" cy="0.3" r="0.75"><stop offset="0" stop-color="#ffffff"/><stop offset="0.5" stop-color="#c8defa"/><stop offset="1" stop-color="#5a9ee8"/></radialGradient></defs><circle cx="6.8" cy="8.6" r="6.2" fill="url(#cg)" stroke="#2a64a8" stroke-width="0.9"/><path d="M9.2 6.4H5.2V10.8H9.2" fill="none" stroke="#3a4f6a" stroke-width="1.3" stroke-linejoin="round"/><rect x="8.5" y="0.5" width="7" height="7" fill="#ffe818"/><path d="M9.7 1.3h1.3v2.2h2V1.3h1.3v5H13V4.6h-2V6.3H9.7z" fill="#ff5500"/></svg>
<div class="a t " style="left:241px;top:477.75px;font:14px 'Liberation Sans';line-height:16.8px;color:#c8c8c8;letter-spacing:0.784px;">PiratePig.hx</div>
<svg class="a" style="left:223px;top:497px" width="16" height="15" viewBox="0 0 16 15"><defs><radialGradient id="cg" cx="0.35" cy="0.3" r="0.75"><stop offset="0" stop-color="#ffffff"/><stop offset="0.5" stop-color="#c8defa"/><stop offset="1" stop-color="#5a9ee8"/></radialGradient></defs><circle cx="6.8" cy="8.6" r="6.2" fill="url(#cg)" stroke="#2a64a8" stroke-width="0.9"/><path d="M9.2 6.4H5.2V10.8H9.2" fill="none" stroke="#3a4f6a" stroke-width="1.3" stroke-linejoin="round"/><rect x="8.5" y="0.5" width="7" height="7" fill="#ffe818"/><path d="M9.7 1.3h1.3v2.2h2V1.3h1.3v5H13V4.6h-2V6.3H9.7z" fill="#ff5500"/></svg>
<div class="a t " style="left:241px;top:496.75px;font:14px 'Liberation Sans';line-height:16.8px;color:#c8c8c8;letter-spacing:0.866px;">PiratePigGame.hx</div>
<svg class="a" style="left:223px;top:516px" width="16" height="15" viewBox="0 0 16 15"><defs><radialGradient id="cg" cx="0.35" cy="0.3" r="0.75"><stop offset="0" stop-color="#ffffff"/><stop offset="0.5" stop-color="#c8defa"/><stop offset="1" stop-color="#5a9ee8"/></radialGradient></defs><circle cx="6.8" cy="8.6" r="6.2" fill="url(#cg)" stroke="#2a64a8" stroke-width="0.9"/><path d="M9.2 6.4H5.2V10.8H9.2" fill="none" stroke="#3a4f6a" stroke-width="1.3" stroke-linejoin="round"/><rect x="8.5" y="0.5" width="7" height="7" fill="#ffe818"/><path d="M9.7 1.3h1.3v2.2h2V1.3h1.3v5H13V4.6h-2V6.3H9.7z" fill="#ff5500"/></svg>
<div class="a t " style="left:241px;top:515.75px;font:14px 'Liberation Sans';line-height:16.8px;color:#c8c8c8;letter-spacing:0.776px;">Tile.hx</div>
<svg class="a" style="left:124px;top:536px" width="14" height="14" viewBox="0 0 14 14"><path d="M1 0.5H7.6V9.6Q7.6 13.2 4 13.2H1V10.6H4Q5 10.6 5 9.6V3.1H1z" fill="#36a8dc"/><circle cx="2.6" cy="6.9" r="1.9" fill="#f09a20"/><rect x="9.4" y="0.5" width="3.2" height="12.7" fill="#36a8dc"/></svg>
<div class="a t " style="left:141px;top:534.75px;font:14px 'Liberation Sans';line-height:16.8px;color:#c8c8c8;letter-spacing:0.766px;">idea-setup.iml</div>
<svg class="a" style="left:125px;top:554px" width="12" height="15" viewBox="0 0 12 15"><path d="M1 1H7.5L11 4.5V14H1z" fill="none" stroke="#a8a8a8" stroke-width="1.6"/><rect x="3.5" y="6" width="5" height="1.2" fill="#33a5d8"/><rect x="3.5" y="8.3" width="5" height="1.2" fill="#33a5d8"/><rect x="3.5" y="10.6" width="5" height="1.2" fill="#33a5d8"/></svg>
<div class="a t " style="left:141px;top:553.75px;font:14px 'Liberation Sans';line-height:16.8px;color:#c8c8c8;letter-spacing:0.734px;">Pirate Pig.hxproj</div>
<div class="a" style="left:429px;top:110px;width:1044px;height:24px;background:linear-gradient(#4e4e4e,#484848)"></div>
<div class="a" style="left:429px;top:110px;width:1044px;height:1px;background:#5a5a5a"></div>
<div class="a" style="left:429px;top:134px;width:1044px;height:1px;background:#303234"></div>
<div class="a" style="left:429px;top:135px;width:1044px;height:3px;background:linear-gradient(#5f5f5f,#575757)"></div>
<div class="a" style="left:429px;top:110px;width:162px;height:25px;background:linear-gradient(#595959,#4f4f4f);border-left:1px solid #3a3a3a;border-right:1px solid #3a3a3a"></div>
<svg class="a" style="left:440px;top:114px" width="16" height="15" viewBox="0 0 16 15"><defs><radialGradient id="cg" cx="0.35" cy="0.3" r="0.75"><stop offset="0" stop-color="#ffffff"/><stop offset="0.5" stop-color="#c8defa"/><stop offset="1" stop-color="#5a9ee8"/></radialGradient></defs><circle cx="6.8" cy="8.6" r="6.2" fill="url(#cg)" stroke="#2a64a8" stroke-width="0.9"/><path d="M9.2 6.4H5.2V10.8H9.2" fill="none" stroke="#3a4f6a" stroke-width="1.3" stroke-linejoin="round"/><rect x="8.5" y="0.5" width="7" height="7" fill="#ffe818"/><path d="M9.7 1.3h1.3v2.2h2V1.3h1.3v5H13V4.6h-2V6.3H9.7z" fill="#ff5500"/></svg>
<div class="a t " style="left:466.4px;top:114.69px;font:13px 'Liberation Sans';line-height:15.6px;color:#c9c9c9;letter-spacing:-0.246px;">PiratePigGame.hx</div>
<svg class="a" style="left:575px;top:118px" width="7" height="7" viewBox="0 0 7 7"><path d="M0.5 0.5L6.5 6.5M6.5 0.5L0.5 6.5" stroke="#8f8f8f" stroke-width="1.3"/></svg>
<div class="a" style="left:591px;top:110px;width:99px;height:24px;background:#474a4c;border-right:1px solid #3a3d3f"></div>
<svg class="a" style="left:602px;top:114px" width="16" height="15" viewBox="0 0 16 15"><defs><radialGradient id="cg" cx="0.35" cy="0.3" r="0.75"><stop offset="0" stop-color="#ffffff"/><stop offset="0.5" stop-color="#c8defa"/><stop offset="1" stop-color="#5a9ee8"/></radialGradient></defs><circle cx="6.8" cy="8.6" r="6.2" fill="url(#cg)" stroke="#2a64a8" stroke-width="0.9"/><path d="M9.2 6.4H5.2V10.8H9.2" fill="none" stroke="#3a4f6a" stroke-width="1.3" stroke-linejoin="round"/><rect x="8.5" y="0.5" width="7" height="7" fill="#ffe818"/><path d="M9.7 1.3h1.3v2.2h2V1.3h1.3v5H13V4.6h-2V6.3H9.7z" fill="#ff5500"/></svg>
<div class="a t " style="left:627.7px;top:114.69px;font:13px 'Liberation Sans';line-height:15.6px;color:#c9c9c9;letter-spacing:0.149px;">Tile.hx</div>
<svg class="a" style="left:674px;top:118px" width="7" height="7" viewBox="0 0 7 7"><path d="M0.5 0.5L6.5 6.5M6.5 0.5L0.5 6.5" stroke="#8f8f8f" stroke-width="1.3"/></svg>
<div class="a" style="left:429px;top:138px;width:60px;height:411px;background:#434547"></div>
<div class="a" style="left:463px;top:138px;width:1px;height:411px;background:repeating-linear-gradient(#7c7c7c 0 1px,transparent 1px 2px)"></div>
<div class="a" style="left:489px;top:138px;width:1px;height:411px;background:repeating-linear-gradient(#9a9a9a 0 1px,transparent 1px 2px)"></div>
<div class="a" style="left:490px;top:138px;width:963px;height:411px;background:#171717"></div>
<div class="a" style="left:1453px;top:138px;width:20px;height:411px;background:#4b4f52"></div>
<div class="a" style="left:1458px;top:140px;width:10px;height:11px;background:#5fcb6a"></div>
<div class="a" style="left:1464px;top:384px;width:9px;height:38px;background:linear-gradient(90deg,#585858,#626262);border-radius:3px 0 0 3px"></div>
<div class="a" style="left:490px;top:347px;width:963px;height:19px;background:#464646"></div>
<div class="a t " style="left:431px;top:137.98px;font:18.5px 'Liberation Mono';line-height:22.2px;color:#8e8e8e;letter-spacing:-1.102px;-webkit-text-stroke:0.35px currentColor">379</div>
<div class="a t " style="left:431px;top:156.98px;font:18.5px 'Liberation Mono';line-height:22.2px;color:#8e8e8e;letter-spacing:-1.102px;-webkit-text-stroke:0.35px currentColor">380</div>
<div class="a t " style="left:431px;top:175.98px;font:18.5px 'Liberation Mono';line-height:22.2px;color:#8e8e8e;letter-spacing:-1.102px;-webkit-text-stroke:0.35px currentColor">381</div>
<div class="a t " style="left:431px;top:194.98px;font:18.5px 'Liberation Mono';line-height:22.2px;color:#8e8e8e;letter-spacing:-1.102px;-webkit-text-stroke:0.35px currentColor">382</div>
<div class="a t " style="left:431px;top:213.98px;font:18.5px 'Liberation Mono';line-height:22.2px;color:#8e8e8e;letter-spacing:-1.102px;-webkit-text-stroke:0.35px currentColor">383</div>
<div class="a t " style="left:431px;top:232.98px;font:18.5px 'Liberation Mono';line-height:22.2px;color:#8e8e8e;letter-spacing:-1.102px;-webkit-text-stroke:0.35px currentColor">384</div>
<div class="a t " style="left:431px;top:251.98px;font:18.5px 'Liberation Mono';line-height:22.2px;color:#8e8e8e;letter-spacing:-1.102px;-webkit-text-stroke:0.35px currentColor">385</div>
<div class="a t " style="left:431px;top:270.98px;font:18.5px 'Liberation Mono';line-height:22.2px;color:#8e8e8e;letter-spacing:-1.102px;-webkit-text-stroke:0.35px currentColor">386</div>
<div class="a t " style="left:431px;top:289.98px;font:18.5px 'Liberation Mono';line-height:22.2px;color:#8e8e8e;letter-spacing:-1.102px;-webkit-text-stroke:0.35px currentColor">387</div>
<div class="a t " style="left:431px;top:308.98px;font:18.5px 'Liberation Mono';line-height:22.2px;color:#8e8e8e;letter-spacing:-1.102px;-webkit-text-stroke:0.35px currentColor">388</div>
<div class="a t " style="left:431px;top:327.98px;font:18.5px 'Liberation Mono';line-height:22.2px;color:#8e8e8e;letter-spacing:-1.102px;-webkit-text-stroke:0.35px currentColor">389</div>
<div class="a t " style="left:431px;top:346.98px;font:18.5px 'Liberation Mono';line-height:22.2px;color:#8e8e8e;letter-spacing:-1.102px;-webkit-text-stroke:0.35px currentColor">390</div>
<div class="a t " style="left:431px;top:365.98px;font:18.5px 'Liberation Mono';line-height:22.2px;color:#8e8e8e;letter-spacing:-1.102px;-webkit-text-stroke:0.35px currentColor">391</div>
<div class="a t " style="left:431px;top:384.98px;font:18.5px 'Liberation Mono';line-height:22.2px;color:#8e8e8e;letter-spacing:-1.102px;-webkit-text-stroke:0.35px currentColor">392</div>
<div class="a t " style="left:431px;top:403.98px;font:18.5px 'Liberation Mono';line-height:22.2px;color:#8e8e8e;letter-spacing:-1.102px;-webkit-text-stroke:0.35px currentColor">393</div>
<div class="a t " style="left:431px;top:422.98px;font:18.5px 'Liberation Mono';line-height:22.2px;color:#8e8e8e;letter-spacing:-1.102px;-webkit-text-stroke:0.35px currentColor">394</div>
<div class="a t " style="left:431px;top:441.98px;font:18.5px 'Liberation Mono';line-height:22.2px;color:#8e8e8e;letter-spacing:-1.102px;-webkit-text-stroke:0.35px currentColor">395</div>
<div class="a t " style="left:431px;top:460.98px;font:18.5px 'Liberation Mono';line-height:22.2px;color:#8e8e8e;letter-spacing:-1.102px;-webkit-text-stroke:0.35px currentColor">396</div>
<div class="a t " style="left:431px;top:479.98px;font:18.5px 'Liberation Mono';line-height:22.2px;color:#8e8e8e;letter-spacing:-1.102px;-webkit-text-stroke:0.35px currentColor">397</div>
<div class="a t " style="left:431px;top:498.98px;font:18.5px 'Liberation Mono';line-height:22.2px;color:#8e8e8e;letter-spacing:-1.102px;-webkit-text-stroke:0.35px currentColor">398</div>
<div class="a t " style="left:431px;top:517.98px;font:18.5px 'Liberation Mono';line-height:22.2px;color:#8e8e8e;letter-spacing:-1.102px;-webkit-text-stroke:0.35px currentColor">399</div>
<div class="a t " style="left:431px;top:536.98px;font:18.5px 'Liberation Mono';line-height:22.2px;color:#8e8e8e;letter-spacing:-1.102px;-webkit-text-stroke:0.35px currentColor">400</div>
<svg class="a" style="left:485px;top:142px" width="9" height="12" viewBox="0 0 9 12"><path d="M0.5 0.5H8.5V7.5L4.5 11L0.5 7.5z" fill="#171717" stroke="#8a8a8a" stroke-width="1"/><path d="M2.5 4.5H6.5" stroke="#aaa" stroke-width="1"/></svg>
<svg class="a" style="left:485px;top:180px" width="9" height="12" viewBox="0 0 9 12"><path d="M0.5 0.5H8.5V7.5L4.5 11L0.5 7.5z" fill="#171717" stroke="#8a8a8a" stroke-width="1"/><path d="M2.5 4.5H6.5" stroke="#aaa" stroke-width="1"/></svg>
<svg class="a" style="left:485px;top:256px" width="9" height="12" viewBox="0 0 9 12"><path d="M0.5 11.5H8.5V4.5L4.5 1L0.5 4.5z" fill="#171717" stroke="#8a8a8a" stroke-width="1"/><path d="M2.5 7.5H6.5" stroke="#aaa" stroke-width="1"/></svg>
<svg class="a" style="left:485px;top:294px" width="9" height="12" viewBox="0 0 9 12"><path d="M0.5 11.5H8.5V4.5L4.5 1L0.5 4.5z" fill="#171717" stroke="#8a8a8a" stroke-width="1"/><path d="M2.5 7.5H6.5" stroke="#aaa" stroke-width="1"/></svg>
<svg class="a" style="left:485px;top:446px" width="9" height="12" viewBox="0 0 9 12"><path d="M0.5 11.5H8.5V4.5L4.5 1L0.5 4.5z" fill="#171717" stroke="#8a8a8a" stroke-width="1"/><path d="M2.5 7.5H6.5" stroke="#aaa" stroke-width="1"/></svg>
<svg class="a" style="left:485px;top:503px" width="9" height="12" viewBox="0 0 9 12"><path d="M0.5 0.5H8.5V7.5L4.5 11L0.5 7.5z" fill="#171717" stroke="#8a8a8a" stroke-width="1"/><path d="M2.5 4.5H6.5" stroke="#aaa" stroke-width="1"/></svg>
<div class="a" style="left:537px;top:138px;width:1px;height:304px;background:#3a3a3a"></div>
<div class="a" style="left:577px;top:157px;width:1px;height:133px;background:#3a3a3a"></div>
<div class="a" style="left:617px;top:195px;width:1px;height:57px;background:#3a3a3a"></div>
<div class="a" style="left:537px;top:518px;width:1px;height:31px;background:#3a3a3a"></div>
<div class="a" style="left:675px;top:349px;width:10px;height:16px;background:#8a8a8a"></div>
<div class="a t " style="left:575px;top:137.78px;font:18.5px 'Liberation Mono';line-height:22.2px;color:#f0145a;letter-spacing:-1.102px;-webkit-text-stroke:0.35px currentColor">for</div>
<div class="a t " style="left:605px;top:137.78px;font:18.5px 'Liberation Mono';line-height:22.2px;color:#f4f4f4;letter-spacing:-1.102px;-webkit-text-stroke:0.35px currentColor"> (row in 0...</div>
<div class="a t " style="left:735px;top:137.78px;font:18.5px 'Liberation Mono';line-height:22.2px;color:#e6db74;letter-spacing:-1.102px;-webkit-text-stroke:0.35px currentColor">NUM_ROWS</div>
<div class="a t " style="left:815px;top:137.78px;font:18.5px 'Liberation Mono';line-height:22.2px;color:#f4f4f4;letter-spacing:-1.102px;-webkit-text-stroke:0.35px currentColor">) {</div>
<div class="a t " style="left:615px;top:175.78px;font:18.5px 'Liberation Mono';line-height:22.2px;color:#f0145a;letter-spacing:-1.102px;-webkit-text-stroke:0.35px currentColor">for</div>
<div class="a t " style="left:645px;top:175.78px;font:18.5px 'Liberation Mono';line-height:22.2px;color:#f4f4f4;letter-spacing:-1.102px;-webkit-text-stroke:0.35px currentColor"> (column in 0...</div>
<div class="a t " style="left:805px;top:175.78px;font:18.5px 'Liberation Mono';line-height:22.2px;color:#e6db74;letter-spacing:-1.102px;-webkit-text-stroke:0.35px currentColor">NUM_COLUMNS</div>
<div class="a t " style="left:915px;top:175.78px;font:18.5px 'Liberation Mono';line-height:22.2px;color:#f4f4f4;letter-spacing:-1.102px;-webkit-text-stroke:0.35px currentColor">) {</div>
<div class="a t " style="left:655px;top:213.78px;font:18.5px 'Liberation Mono';line-height:22.2px;color:#84dc22;letter-spacing:-1.102px;-webkit-text-stroke:0.35px currentColor">addTile</div>
<div class="a t " style="left:725px;top:213.78px;font:18.5px 'Liberation Mono';line-height:22.2px;color:#f4f4f4;letter-spacing:-1.102px;-webkit-text-stroke:0.35px currentColor"> (row</div>
<div class="a t " style="left:775px;top:213.78px;font:18.5px 'Liberation Mono';line-height:22.2px;color:#4ec9e8;letter-spacing:-1.102px;-webkit-text-stroke:0.35px currentColor">,</div>
<div class="a t " style="left:785px;top:213.78px;font:18.5px 'Liberation Mono';line-height:22.2px;color:#f4f4f4;letter-spacing:-1.102px;-webkit-text-stroke:0.35px currentColor"> column</div>
<div class="a t " style="left:855px;top:213.78px;font:18.5px 'Liberation Mono';line-height:22.2px;color:#4ec9e8;letter-spacing:-1.102px;-webkit-text-stroke:0.35px currentColor">,</div>
<div class="a t " style="left:865px;top:213.78px;font:18.5px 'Liberation Mono';line-height:22.2px;color:#f4f4f4;letter-spacing:-1.102px;-webkit-text-stroke:0.35px currentColor"> false);</div>
<div class="a t " style="left:615px;top:251.78px;font:18.5px 'Liberation Mono';line-height:22.2px;color:#f4f4f4;letter-spacing:-1.102px;-webkit-text-stroke:0.35px currentColor">}</div>
<div class="a t " style="left:575px;top:289.78px;font:18.5px 'Liberation Mono';line-height:22.2px;color:#f4f4f4;letter-spacing:-1.102px;-webkit-text-stroke:0.35px currentColor">}</div>
<div class="a t " style="left:575px;top:327.78px;font:18.5px 'Liberation Mono';line-height:22.2px;color:#e6db74;letter-spacing:-1.102px;-webkit-text-stroke:0.35px currentColor">IntroSound</div>
<div class="a t " style="left:675px;top:327.78px;font:18.5px 'Liberation Mono';line-height:22.2px;color:#f4f4f4;letter-spacing:-1.102px;-webkit-text-stroke:0.35px currentColor">.</div>
<div class="a t " style="left:685px;top:327.78px;font:18.5px 'Liberation Mono';line-height:22.2px;color:#84dc22;letter-spacing:-1.102px;-webkit-text-stroke:0.35px currentColor">play</div>
<div class="a t " style="left:725px;top:327.78px;font:18.5px 'Liberation Mono';line-height:22.2px;color:#f4f4f4;letter-spacing:-1.102px;-webkit-text-stroke:0.35px currentColor"> ();</div>
<div class="a t " style="left:575px;top:346.78px;font:18.5px 'Liberation Mono';line-height:22.2px;color:#f4f4f4;letter-spacing:-1.102px;-webkit-text-stroke:0.35px currentColor">trace</div>
<div class="a t " style="left:625px;top:346.78px;font:18.5px 'Liberation Mono';line-height:22.2px;color:#f07a2a;letter-spacing:-1.102px;-webkit-text-stroke:0.35px currentColor">(</div>
<div class="a t " style="left:635px;top:346.78px;font:18.5px 'Liberation Mono';line-height:22.2px;color:#f4f4f4;letter-spacing:-1.102px;-webkit-text-stroke:0.35px currentColor">123</div>
<div class="a t " style="left:665px;top:346.78px;font:18.5px 'Liberation Mono';line-height:22.2px;color:#f07a2a;letter-spacing:-1.102px;-webkit-text-stroke:0.35px currentColor">)</div>
<div class="a t " style="left:675px;top:346.78px;font:18.5px 'Liberation Mono';line-height:22.2px;color:#f4f4f4;letter-spacing:-1.102px;-webkit-text-stroke:0.35px currentColor">;</div>
<div class="a t " style="left:575px;top:384.78px;font:18.5px 'Liberation Mono';line-height:22.2px;color:#84dc22;letter-spacing:-1.102px;-webkit-text-stroke:0.35px currentColor">removeEventListener</div>
<div class="a t " style="left:765px;top:384.78px;font:18.5px 'Liberation Mono';line-height:22.2px;color:#f4f4f4;letter-spacing:-1.102px;-webkit-text-stroke:0.35px currentColor"> (</div>
<div class="a t " style="left:785px;top:384.78px;font:18.5px 'Liberation Mono';line-height:22.2px;color:#4ec9e8;letter-spacing:-1.102px;-webkit-text-stroke:0.35px currentColor">Event</div>
<div class="a t " style="left:835px;top:384.78px;font:18.5px 'Liberation Mono';line-height:22.2px;color:#f4f4f4;letter-spacing:-1.102px;-webkit-text-stroke:0.35px currentColor">.</div>
<div class="a t " style="left:845px;top:384.78px;font:18.5px 'Liberation Mono';line-height:22.2px;color:#e6db74;letter-spacing:-1.102px;-webkit-text-stroke:0.35px currentColor">ENTER_FRAME</div>
<div class="a t " style="left:955px;top:384.78px;font:18.5px 'Liberation Mono';line-height:22.2px;color:#4ec9e8;letter-spacing:-1.102px;-webkit-text-stroke:0.35px currentColor">,</div>
<div class="a t " style="left:965px;top:384.78px;font:18.5px 'Liberation Mono';line-height:22.2px;color:#84dc22;letter-spacing:-1.102px;-webkit-text-stroke:0.35px currentColor"> this_onEnterFrame</div>
<div class="a t " style="left:1145px;top:384.78px;font:18.5px 'Liberation Mono';line-height:22.2px;color:#f4f4f4;letter-spacing:-1.102px;-webkit-text-stroke:0.35px currentColor">);</div>
<div class="a t " style="left:575px;top:403.78px;font:18.5px 'Liberation Mono';line-height:22.2px;color:#84dc22;letter-spacing:-1.102px;-webkit-text-stroke:0.35px currentColor">addEventListener</div>
<div class="a t " style="left:735px;top:403.78px;font:18.5px 'Liberation Mono';line-height:22.2px;color:#f4f4f4;letter-spacing:-1.102px;-webkit-text-stroke:0.35px currentColor"> (</div>
<div class="a t " style="left:755px;top:403.78px;font:18.5px 'Liberation Mono';line-height:22.2px;color:#4ec9e8;letter-spacing:-1.102px;-webkit-text-stroke:0.35px currentColor">Event</div>
<div class="a t " style="left:805px;top:403.78px;font:18.5px 'Liberation Mono';line-height:22.2px;color:#f4f4f4;letter-spacing:-1.102px;-webkit-text-stroke:0.35px currentColor">.</div>
<div class="a t " style="left:815px;top:403.78px;font:18.5px 'Liberation Mono';line-height:22.2px;color:#e6db74;letter-spacing:-1.102px;-webkit-text-stroke:0.35px currentColor">ENTER_FRAME</div>
<div class="a t " style="left:925px;top:403.78px;font:18.5px 'Liberation Mono';line-height:22.2px;color:#4ec9e8;letter-spacing:-1.102px;-webkit-text-stroke:0.35px currentColor">,</div>
<div class="a t " style="left:935px;top:403.78px;font:18.5px 'Liberation Mono';line-height:22.2px;color:#84dc22;letter-spacing:-1.102px;-webkit-text-stroke:0.35px currentColor"> this_onEnterFrame</div>
<div class="a t " style="left:1115px;top:403.78px;font:18.5px 'Liberation Mono';line-height:22.2px;color:#f4f4f4;letter-spacing:-1.102px;-webkit-text-stroke:0.35px currentColor">);</div>
<div class="a t " style="left:535px;top:441.78px;font:18.5px 'Liberation Mono';line-height:22.2px;color:#f4f4f4;letter-spacing:-1.102px;-webkit-text-stroke:0.35px currentColor">}</div>
<div class="a t " style="left:535px;top:498.78px;font:18.5px 'Liberation Mono';line-height:22.2px;color:#f0145a;letter-spacing:-1.102px;-webkit-text-stroke:0.35px currentColor">public function</div>
<div class="a t " style="left:685px;top:498.78px;font:18.5px 'Liberation Mono';line-height:22.2px;color:#84dc22;letter-spacing:-1.102px;-webkit-text-stroke:0.35px currentColor"> removeTile</div>
<div class="a t " style="left:795px;top:498.78px;font:18.5px 'Liberation Mono';line-height:22.2px;color:#f4f4f4;letter-spacing:-1.102px;-webkit-text-stroke:0.35px currentColor"> (row:</div>
<div class="a t " style="left:855px;top:498.78px;font:18.5px 'Liberation Mono';line-height:22.2px;color:#4ec9e8;letter-spacing:-1.102px;-webkit-text-stroke:0.35px currentColor">Int</div>
<div class="a t " style="left:885px;top:498.78px;font:18.5px 'Liberation Mono';line-height:22.2px;color:#4ec9e8;letter-spacing:-1.102px;-webkit-text-stroke:0.35px currentColor">,</div>
<div class="a t " style="left:895px;top:498.78px;font:18.5px 'Liberation Mono';line-height:22.2px;color:#f4f4f4;letter-spacing:-1.102px;-webkit-text-stroke:0.35px currentColor"> column:</div>
<div class="a t " style="left:975px;top:498.78px;font:18.5px 'Liberation Mono';line-height:22.2px;color:#4ec9e8;letter-spacing:-1.102px;-webkit-text-stroke:0.35px currentColor">Int</div>
<div class="a t " style="left:1005px;top:498.78px;font:18.5px 'Liberation Mono';line-height:22.2px;color:#4ec9e8;letter-spacing:-1.102px;-webkit-text-stroke:0.35px currentColor">,</div>
<div class="a t " style="left:1015px;top:498.78px;font:18.5px 'Liberation Mono';line-height:22.2px;color:#f4f4f4;letter-spacing:-1.102px;-webkit-text-stroke:0.35px currentColor"> animate:</div>
<div class="a t " style="left:1105px;top:498.78px;font:18.5px 'Liberation Mono';line-height:22.2px;color:#4ec9e8;letter-spacing:-1.102px;-webkit-text-stroke:0.35px currentColor">Bool</div>
<div class="a t " style="left:1145px;top:498.78px;font:18.5px 'Liberation Mono';line-height:22.2px;color:#f4f4f4;letter-spacing:-1.102px;-webkit-text-stroke:0.35px currentColor"> = true):</div>
<div class="a t " style="left:1235px;top:498.78px;font:18.5px 'Liberation Mono';line-height:22.2px;color:#4ec9e8;letter-spacing:-1.102px;-webkit-text-stroke:0.35px currentColor">Void</div>
<div class="a t " style="left:1275px;top:498.78px;font:18.5px 'Liberation Mono';line-height:22.2px;color:#f4f4f4;letter-spacing:-1.102px;-webkit-text-stroke:0.35px currentColor"> {</div>
<div class="a t " style="left:575px;top:536.78px;font:18.5px 'Liberation Mono';line-height:22.2px;color:#f0145a;letter-spacing:-1.102px;-webkit-text-stroke:0.35px currentColor">var</div>
<div class="a t " style="left:605px;top:536.78px;font:18.5px 'Liberation Mono';line-height:22.2px;color:#f4f4f4;letter-spacing:-1.102px;-webkit-text-stroke:0.35px currentColor"> tile = </div>
<div class="a t " style="left:685px;top:536.78px;font:18.5px 'Liberation Mono';line-height:22.2px;color:#e6db74;letter-spacing:-1.102px;-webkit-text-stroke:0.35px currentColor">tiles</div>
<div class="a t " style="left:735px;top:536.78px;font:18.5px 'Liberation Mono';line-height:22.2px;color:#f4f4f4;letter-spacing:-1.102px;-webkit-text-stroke:0.35px currentColor">[row][column];</div>
<div class="a" style="left:429px;top:549px;width:60px;height:13px;background:#434547"></div>
<div class="a" style="left:489px;top:549px;width:984px;height:13px;background:#4e5153"></div>
<div class="a" style="left:495px;top:551px;width:428px;height:9px;border-radius:4px;background:linear-gradient(#666,#585858)"></div>
<div class="a" style="left:80px;top:562px;width:1393px;height:1px;background:#2f3133"></div>
<div class="a" style="left:81px;top:563px;width:1392px;height:1px;background:#56595b"></div>
<div class="a" style="left:81px;top:564px;width:1392px;height:22px;background:#4b4f52"></div>
<div class="a" style="left:80px;top:586px;width:1393px;height:1px;background:#35383a"></div>
<div class="a t " style="left:86.7px;top:566.69px;font:13px 'Liberation Sans';line-height:15.6px;color:#8f8f8f;letter-spacing:-0.224px;">Debug:</div>
<div class="a" style="left:136px;top:564px;width:1px;height:22px;background:#3c3f41"></div>
<div class="a" style="left:137px;top:564px;width:99px;height:22px;background:#4e5153;border-left:1px solid #424547;border-right:1px solid #424547"></div>
<div class="a" style="left:144px;top:567px;width:16px;height:15px;opacity:0.6"><svg class="a" style="left:0px;top:0px" width="16" height="15" viewBox="0 0 16 15"><defs><linearGradient id="hg" x1="0" y1="0" x2="0" y2="1"><stop offset="0" stop-color="#fff4a8"/><stop offset="1" stop-color="#ffd640"/></linearGradient></defs><rect x="0.4" y="0.4" width="15.2" height="14.2" fill="url(#hg)" stroke="#f0d878" stroke-width="0.8"/><path d="M2.5 2H6.2V5.8H9.8V2H13.5V13H9.8V9.2H6.2V13H2.5z" fill="#f26a1e"/><path d="M4.3 3.2V11.8M11.7 3.2V11.8M4.3 7.5H11.7" stroke="#ffb060" stroke-width="0.9"/><rect x="6.2" y="10" width="3.6" height="3" fill="#ffe680"/></svg></div>
<div class="a t " style="left:164.5px;top:566.69px;font:13px 'Liberation Sans';line-height:15.6px;color:#a9a9a9;letter-spacing:0.255px;">idea-setup</div>
<div class="a" style="left:237px;top:564px;width:98px;height:22px;background:#4e5153;border-left:1px solid #424547;border-right:1px solid #424547"></div>
<div class="a" style="left:244px;top:567px;width:16px;height:15px;opacity:0.6"><svg class="a" style="left:0px;top:0px" width="16" height="15" viewBox="0 0 16 15"><defs><linearGradient id="hg" x1="0" y1="0" x2="0" y2="1"><stop offset="0" stop-color="#fff4a8"/><stop offset="1" stop-color="#ffd640"/></linearGradient></defs><rect x="0.4" y="0.4" width="15.2" height="14.2" fill="url(#hg)" stroke="#f0d878" stroke-width="0.8"/><path d="M2.5 2H6.2V5.8H9.8V2H13.5V13H9.8V9.2H6.2V13H2.5z" fill="#f26a1e"/><path d="M4.3 3.2V11.8M11.7 3.2V11.8M4.3 7.5H11.7" stroke="#ffb060" stroke-width="0.9"/><rect x="6.2" y="10" width="3.6" height="3" fill="#ffe680"/></svg></div>
<div class="a t " style="left:264.6px;top:566.69px;font:13px 'Liberation Sans';line-height:15.6px;color:#a9a9a9;letter-spacing:0.255px;">idea-setup</div>
<div class="a" style="left:238px;top:564px;width:96px;height:22px;background:#484b4d"></div>
<div class="a t " style="left:264.6px;top:566.69px;font:13px 'Liberation Sans';line-height:15.6px;color:#a9a9a9;letter-spacing:0.255px;">idea-setup</div>
<div class="a" style="left:244px;top:567px;width:16px;height:15px;opacity:0.6"><svg class="a" style="left:0px;top:0px" width="16" height="15" viewBox="0 0 16 15"><defs><linearGradient id="hg" x1="0" y1="0" x2="0" y2="1"><stop offset="0" stop-color="#fff4a8"/><stop offset="1" stop-color="#ffd640"/></linearGradient></defs><rect x="0.4" y="0.4" width="15.2" height="14.2" fill="url(#hg)" stroke="#f0d878" stroke-width="0.8"/><path d="M2.5 2H6.2V5.8H9.8V2H13.5V13H9.8V9.2H6.2V13H2.5z" fill="#f26a1e"/><path d="M4.3 3.2V11.8M11.7 3.2V11.8M4.3 7.5H11.7" stroke="#ffb060" stroke-width="0.9"/><rect x="6.2" y="10" width="3.6" height="3" fill="#ffe680"/></svg></div>
<div class="a" style="left:343px;top:567px;width:16px;height:15px;opacity:0.6"><svg class="a" style="left:0px;top:0px" width="16" height="15" viewBox="0 0 16 15"><defs><linearGradient id="hg" x1="0" y1="0" x2="0" y2="1"><stop offset="0" stop-color="#fff4a8"/><stop offset="1" stop-color="#ffd640"/></linearGradient></defs><rect x="0.4" y="0.4" width="15.2" height="14.2" fill="url(#hg)" stroke="#f0d878" stroke-width="0.8"/><path d="M2.5 2H6.2V5.8H9.8V2H13.5V13H9.8V9.2H6.2V13H2.5z" fill="#f26a1e"/><path d="M4.3 3.2V11.8M11.7 3.2V11.8M4.3 7.5H11.7" stroke="#ffb060" stroke-width="0.9"/><rect x="6.2" y="10" width="3.6" height="3" fill="#ffe680"/></svg></div>
<div class="a t " style="left:364.6px;top:566.69px;font:13px 'Liberation Sans';line-height:15.6px;color:#a9a9a9;letter-spacing:0.255px;">idea-setup</div>
<svg class="a" style="left:1426px;top:567px" width="20" height="14" viewBox="0 0 20 14"><g transform="translate(6 7)"><circle r="3.8" fill="#a0a0a0"/><circle r="1.6" fill="#4b4f52"/><rect x="-1.1" y="-6" width="2.2" height="2.8" fill="#a0a0a0" transform="rotate(0)"/><rect x="-1.1" y="-6" width="2.2" height="2.8" fill="#a0a0a0" transform="rotate(45)"/><rect x="-1.1" y="-6" width="2.2" height="2.8" fill="#a0a0a0" transform="rotate(90)"/><rect x="-1.1" y="-6" width="2.2" height="2.8" fill="#a0a0a0" transform="rotate(135)"/><rect x="-1.1" y="-6" width="2.2" height="2.8" fill="#a0a0a0" transform="rotate(180)"/><rect x="-1.1" y="-6" width="2.2" height="2.8" fill="#a0a0a0" transform="rotate(225)"/><rect x="-1.1" y="-6" width="2.2" height="2.8" fill="#a0a0a0" transform="rotate(270)"/><rect x="-1.1" y="-6" width="2.2" height="2.8" fill="#a0a0a0" transform="rotate(315)"/></g><path d="M14 6H19L16.5 9z" fill="#a0a0a0"/></svg>
<svg class="a" style="left:1454px;top:567px" width="12" height="13" viewBox="0 0 12 13"><path d="M6 0V7M3.5 4.5L6 7.5L8.5 4.5" stroke="#a0a0a0" stroke-width="1" fill="none"/><path d="M0 10.5H12" stroke="#a0a0a0" stroke-width="1"/><rect x="6" y="10" width="6" height="2.5" fill="#a0a0a0"/></svg>
<div class="a" style="left:111px;top:617px;width:1px;height:244px;background:#33373a"></div>
<svg class="a" style="left:87px;top:595px" width="16" height="16" viewBox="0 0 16 16"><path d="M2 1.3L4 3.4M6.2 0.9V3M10.2 1.3L8.2 3.4M2 14.7L4 12.6M6.2 15.1V13M10.2 14.7L8.2 12.6" stroke="#b4b4b4" stroke-width="1.1"/><path d="M11.4 2.9Q6 2.4 3 4Q0.8 5.8 0.8 8Q0.8 10.3 3 12Q6 13.6 11.4 13.1Q8.4 10.8 8.4 8Q8.4 5.2 11.4 2.9z" fill="#00c462"/><path d="M9.3 5.2Q12.4 6.6 12.9 8Q12.4 9.4 9.3 10.8Q8.7 8 9.3 5.2z" fill="#b8b8b8"/><path d="M12.3 5.6Q12.9 4.3 15 4.3M12.3 10.4Q12.9 11.7 15 11.7" fill="none" stroke="#b4b4b4" stroke-width="1.1"/></svg>
<div class="a" style="left:112px;top:593px;width:70px;height:25px;background:linear-gradient(#5a5d5f,#525557);border:1px solid #3d4042;border-bottom:none;border-radius:3px 0 0 0"></div>
<div class="a t " style="left:118.3px;top:597.69px;font:13px 'Liberation Sans';line-height:15.6px;color:#d0d0d0;letter-spacing:-0.157px;">Debugger</div>
<div class="a" style="left:182px;top:592px;width:94px;height:26px;background:linear-gradient(#65686a,#575a5c);border:1px solid #3d4042;border-bottom:none;border-radius:3px 3px 0 0"></div>
<svg class="a" style="left:188px;top:598px" width="15" height="14" viewBox="0 0 15 14"><rect x="0.5" y="0.5" width="14" height="13" fill="#8a8a8a"/><rect x="0.5" y="0.5" width="14" height="2.5" fill="#4aaee0"/><rect x="2.5" y="4.5" width="10" height="7" fill="#3b8fbf"/><rect x="4" y="6.5" width="6" height="1" fill="#9fd4f0"/><rect x="4" y="8.5" width="4" height="1" fill="#9fd4f0"/></svg>
<div class="a t " style="left:208.3px;top:597.69px;font:13px 'Liberation Sans';line-height:15.6px;color:#dedede;letter-spacing:-0.616px;">Console</div>
<svg class="a" style="left:260px;top:602px" width="12" height="8" viewBox="0 0 12 8"><path d="M0 5H6M4 3L6.5 5L4 7" stroke="#aaa" stroke-width="0.9" fill="none"/><rect x="8.5" y="0.5" width="3" height="3" fill="#bbb"/></svg>
<div class="a" style="left:112px;top:617px;width:1361px;height:1px;background:#3a3d3f"></div>
<div class="a" style="left:112px;top:618px;width:1361px;height:3px;background:#5c5f61"></div>
<svg class="a" style="left:289px;top:597px" width="16" height="14" viewBox="0 0 16 14"><path d="M0 0L6 5.5L0 11z" fill="#8c8c8c"/><rect x="6" y="3" width="9" height="1.8" fill="#8c8c8c"/><rect x="7" y="6" width="8" height="1.8" fill="#8c8c8c"/><rect x="3" y="9" width="12" height="1.8" fill="#8c8c8c"/><rect x="3" y="12" width="12" height="1.8" fill="#8c8c8c"/></svg>
<div class="a" style="left:313px;top:593px;width:1px;height:20px;background:repeating-linear-gradient(#9a9a9a 0 1px,transparent 1px 3px)"></div>
<svg class="a" style="left:322px;top:595px" width="14" height="16" viewBox="0 0 14 16"><circle cx="10" cy="4" r="3.3" fill="#8c8c8c"/><circle cx="10" cy="12" r="3.3" fill="#8c8c8c"/><path d="M5 3H1.5V12.5H5" stroke="#8c8c8c" stroke-width="1.1" fill="none"/><path d="M4.5 10.5L6.5 12.5L4.5 14.5z" fill="#8c8c8c"/></svg>
<svg class="a" style="left:346px;top:596px" width="15" height="15" viewBox="0 0 15 15"><path d="M1 7V1.5H9.5V4" stroke="#8c8c8c" stroke-width="1.1" fill="none"/><path d="M7.5 3.5H11.5L9.5 6z" fill="#8c8c8c"/><circle cx="8.5" cy="11" r="3.3" fill="#8c8c8c"/></svg>
<svg class="a" style="left:371px;top:596px" width="15" height="15" viewBox="0 0 15 15"><path d="M1 7V1.5H9.5V4" stroke="#8c8c8c" stroke-width="1.1" fill="none"/><path d="M7.5 3.5H11.5L9.5 6z" fill="#8c8c8c"/><circle cx="8.5" cy="11" r="3.3" fill="#8c8c8c"/></svg>
<svg class="a" style="left:396px;top:596px" width="15" height="15" viewBox="0 0 15 15"><path d="M5 5V1.5H12V4" stroke="#8c8c8c" stroke-width="1.1" fill="none"/><path d="M10 3.5H14L12 6z" fill="#8c8c8c"/><circle cx="4" cy="11" r="3.3" fill="#8c8c8c"/></svg>
<svg class="a" style="left:422px;top:596px" width="13" height="15" viewBox="0 0 13 15"><path d="M1 8V1.5H5" stroke="#8c8c8c" stroke-width="1.1" fill="none"/><path d="M1 8.5H4.5" stroke="#8c8c8c" stroke-width="1.1"/><path d="M4 6.5L6 8.5L4 10.5z" fill="#8c8c8c"/><path d="M8 6H12M10 6V14M8 14H12" stroke="#8c8c8c" stroke-width="1"/></svg>
<div class="a" style="left:444px;top:593px;width:1px;height:20px;background:repeating-linear-gradient(#9a9a9a 0 1px,transparent 1px 3px)"></div>
<svg class="a" style="left:453px;top:597px" width="13" height="12" viewBox="0 0 13 12"><rect x="0" y="0" width="13" height="12" fill="#8a8a8a"/><rect x="1" y="2.5" width="11" height="1" fill="#777"/><rect x="1" y="6" width="11" height="1" fill="#777"/></svg>
<div class="a" style="left:472px;top:591px;width:24px;height:24px;background:#5f6264;border:1px solid #808385;border-radius:3px"></div>
<svg class="a" style="left:477px;top:596px" width="14" height="15" viewBox="0 0 14 15"><path d="M0.5 0.5H13.5L8.5 6.5V14L5.5 11V6.5z" fill="#36a9e1"/><rect x="0.5" y="0.5" width="13" height="2" fill="#7bc8ee"/></svg>
<div class="a" style="left:112px;top:621px;width:29px;height:240px;background:#4b4f52"></div>
<div class="a" style="left:141px;top:621px;width:1px;height:240px;background:#3e4143"></div>
<div class="a" style="left:142px;top:621px;width:1315px;height:226px;background:#404040"></div>
<div class="a" style="left:145px;top:623px;width:1px;height:224px;background:repeating-linear-gradient(#7a7a7a 0 1px,transparent 1px 3px)"></div>
<div class="a" style="left:1457px;top:621px;width:13px;height:239px;background:#4b4f52"></div>
<div class="a" style="left:1470px;top:587px;width:1px;height:274px;background:#33373a"></div>
<div class="a" style="left:142px;top:847px;width:1315px;height:13px;background:#4b4f52"></div>
<div class="a" style="left:141px;top:847px;width:5px;height:13px;background:#404346"></div>
<div class="a" style="left:152px;top:849px;width:642px;height:10px;border-radius:4px;background:linear-gradient(#5c5c5c,#525252)"></div>
<div class="a" style="left:111px;top:860px;width:1360px;height:1px;background:#33373a"></div>
<div class="a" style="left:142px;top:621px;width:1315px;height:20px;overflow:hidden">
<div class="a t " style="left:9px;top:2.57px;font:13.2px 'Liberation Mono';line-height:15.84px;color:#c8c8c8;letter-spacing:-0.914px;-webkit-text-stroke:0.3px currentColor">/System/Library/Java/JavaVirtualMachines/1.6.0.jdk/Contents/Home/bin/java -d32 -Dapplication.home=/Applications/Adobe/Flex -Dfile.encoding=UTF-8 -Djava.awt.headless=true -Duser.language=e</div>
</div>
<div class="a t " style="left:151px;top:638.57px;font:13.2px 'Liberation Mono';line-height:15.84px;color:#c8c8c8;letter-spacing:-0.914px;-webkit-text-stroke:0.3px currentColor">Apache fdb (Flash Player Debugger) [build 1447119]</div>
<div class="a t " style="left:151px;top:653.57px;font:13.2px 'Liberation Mono';line-height:15.84px;color:#c8c8c8;letter-spacing:-0.914px;-webkit-text-stroke:0.3px currentColor">Copyright 2012 The Apache Software Foundation.</div>
<div class="a t " style="left:151px;top:668.57px;font:13.2px 'Liberation Mono';line-height:15.84px;color:#c8c8c8;letter-spacing:-0.914px;-webkit-text-stroke:0.3px currentColor">Waiting for Player to connect</div>
<div class="a t " style="left:151px;top:683.57px;font:13.2px 'Liberation Mono';line-height:15.84px;color:#c8c8c8;letter-spacing:-0.914px;-webkit-text-stroke:0.3px currentColor">Player connected; session starting.</div>
<div class="a t " style="left:151px;top:698.57px;font:13.2px 'Liberation Mono';line-height:15.84px;color:#c8c8c8;letter-spacing:-0.914px;-webkit-text-stroke:0.3px currentColor">[trace] PiratePigGame.hx:390: 123</div>
<div class="a t " style="left:151px;top:713.57px;font:13.2px 'Liberation Mono';line-height:15.84px;color:#c8c8c8;letter-spacing:-0.914px;-webkit-text-stroke:0.3px currentColor">Player session terminated</div>
<div class="a" style="left:1473px;top:110px;width:1px;height:753px;background:#333436"></div>
<div class="a" style="left:1474px;top:110px;width:1px;height:753px;background:#646464"></div>
<svg class="a" style="left:1479px;top:123px" width="14" height="13" viewBox="0 0 14 13"><ellipse cx="7" cy="3" rx="6.5" ry="2.8" fill="#9a9a9a"/><rect x="2" y="3" width="10" height="1.5" fill="#e04040"/><rect x="3" y="4.5" width="8" height="7" rx="3" fill="#f0c080"/><rect x="4.5" y="9" width="5" height="1" fill="#a06030"/><rect x="2" y="11.5" width="10" height="1.5" fill="#888"/></svg>
<div class="a t" style="left:1492.8px;top:140.3px;font:14px 'Liberation Sans';line-height:16.8px;color:#c8c8c8;letter-spacing:-0.753px;transform-origin:0 0;transform:rotate(90deg)">Commander</div>
<svg class="a" style="left:1479px;top:234px" width="13" height="13" viewBox="0 0 13 13"><circle cx="6.5" cy="3" r="2" fill="#c090e0"/><ellipse cx="6.5" cy="7" rx="2.3" ry="2" fill="#c090e0"/><ellipse cx="6.5" cy="11" rx="2.8" ry="2.2" fill="#c090e0"/><path d="M1 4L12 10M12 4L1 10M0.5 7H12.5M3 0.5L5 2M10 0.5L8 2" stroke="#a880c0" stroke-width="0.7"/></svg>
<div class="a t" style="left:1492.8px;top:250.3px;font:14px 'Liberation Sans';line-height:16.8px;color:#c8c8c8;letter-spacing:-0.667px;transform-origin:0 0;transform:rotate(90deg)">Ant Build</div>
<svg class="a" style="left:1479px;top:325px" width="14" height="13" viewBox="0 0 14 13"><circle cx="7" cy="5" r="3.8" fill="#f5c080"/><path d="M3 4Q4 0.5 7 1Q10 0.5 11 4L10.5 2Q7 -0.5 3.5 2z" fill="#e07030"/><path d="M1 13Q1 9 7 9Q13 9 13 13z" fill="#30a050"/></svg>
<div class="a t" style="left:1492.8px;top:340.3px;font:14px 'Liberation Sans';line-height:16.8px;color:#c8c8c8;letter-spacing:-0.187px;transform-origin:0 0;transform:rotate(90deg)">IDEtalk</div>
<div class="a t " style="left:1478.5px;top:402.91px;font:bold 17px 'Liberation Sans';line-height:20.4px;color:#4aa8d8;letter-spacing:0.000px;font-style:italic">m</div>

<div class="a t" style="left:1492.8px;top:424.6px;font:14px 'Liberation Sans';line-height:16.8px;color:#c8c8c8;letter-spacing:-0.806px;transform-origin:0 0;transform:rotate(90deg)">Maven Projects</div>
<svg class="a" style="left:1479px;top:538px" width="14" height="11" viewBox="0 0 14 11"><rect x="0.5" y="0.5" width="9" height="8" fill="#3ea6dc"/><rect x="3" y="2.5" width="11" height="8.5" fill="#ddd"/><rect x="4.0" y="4.0" width="1.6" height="1.6" fill="#3e6fa0"/><rect x="4.0" y="6.3" width="1.6" height="1.6" fill="#3e6fa0"/><rect x="4.0" y="8.6" width="1.6" height="1.6" fill="#3e6fa0"/><rect x="6.4" y="4.0" width="1.6" height="1.6" fill="#3e6fa0"/><rect x="6.4" y="6.3" width="1.6" height="1.6" fill="#3e6fa0"/><rect x="6.4" y="8.6" width="1.6" height="1.6" fill="#3e6fa0"/><rect x="8.8" y="4.0" width="1.6" height="1.6" fill="#3e6fa0"/><rect x="8.8" y="6.3" width="1.6" height="1.6" fill="#3e6fa0"/><rect x="8.8" y="8.6" width="1.6" height="1.6" fill="#3e6fa0"/><rect x="11.2" y="4.0" width="1.6" height="1.6" fill="#3e6fa0"/><rect x="11.2" y="6.3" width="1.6" height="1.6" fill="#3e6fa0"/><rect x="11.2" y="8.6" width="1.6" height="1.6" fill="#3e6fa0"/></svg>
<div class="a t" style="left:1492.8px;top:553.0px;font:14px 'Liberation Sans';line-height:16.8px;color:#c8c8c8;letter-spacing:-0.776px;transform-origin:0 0;transform:rotate(90deg)">Database</div>
<svg class="a" style="left:1479px;top:630px" width="14" height="13" viewBox="0 0 14 13"><circle cx="3" cy="3" r="2" fill="none" stroke="#e0a030" stroke-width="1.3"/><circle cx="6.5" cy="6" r="2" fill="none" stroke="#e0a030" stroke-width="1.3"/><circle cx="9.5" cy="9" r="3.5" fill="#3ea6dc"/><circle cx="8.5" cy="8" r="2.2" fill="#f0d040"/></svg>
<div class="a t" style="left:1492.8px;top:646.5px;font:14px 'Liberation Sans';line-height:16.8px;color:#c8c8c8;letter-spacing:-1.805px;transform-origin:0 0;transform:rotate(90deg)">CDI</div>
<svg class="a" style="left:1479px;top:688px" width="14" height="14" viewBox="0 0 14 14"><circle cx="7" cy="7" r="5.5" fill="none" stroke="#50c050" stroke-width="1.8" stroke-dasharray="20 6"/><circle cx="7" cy="7" r="2.5" fill="#30b050"/></svg>
<div class="a t" style="left:1492.8px;top:703.0px;font:14px 'Liberation Sans';line-height:16.8px;color:#c8c8c8;letter-spacing:-0.712px;transform-origin:0 0;transform:rotate(90deg)">JetGradle</div>
<svg class="a" style="left:88px;top:622px" width="14" height="14" viewBox="0 0 14 14"><path d="M4 0L14 7L4 14z" fill="#8c8c8c"/><rect x="0" y="1.0" width="3" height="1.3" fill="#8c8c8c"/><rect x="0" y="3.6" width="3" height="1.3" fill="#8c8c8c"/><rect x="0" y="6.2" width="3" height="1.3" fill="#8c8c8c"/><rect x="0" y="8.8" width="3" height="1.3" fill="#8c8c8c"/><rect x="0" y="11.4" width="3" height="1.3" fill="#8c8c8c"/></svg>
<svg class="a" style="left:89px;top:647px" width="13" height="13" viewBox="0 0 13 13"><rect x="0" y="0" width="13" height="13" fill="#8c8c8c"/></svg>
<div class="a" style="left:86px;top:669px;width:19px;height:1px;background:repeating-linear-gradient(90deg,#8a8a8a 0 1px,transparent 1px 3px)"></div>
<svg class="a" style="left:88px;top:677px" width="15" height="15" viewBox="0 0 15 15"><circle cx="5" cy="5" r="4.5" fill="#f06050"/><circle cx="5" cy="9.5" r="4.8" fill="#f05a48"/><circle cx="12.5" cy="4.5" r="1.6" fill="#bbb"/><circle cx="12.5" cy="9.5" r="1.6" fill="#bbb"/></svg>
<svg class="a" style="left:88px;top:702px" width="15" height="15" viewBox="0 0 15 15"><circle cx="7.5" cy="7.5" r="6.3" fill="none" stroke="#8a8a8a" stroke-width="1.6"/><path d="M3.5 11.5L11.5 3.5" stroke="#8a8a8a" stroke-width="1.6"/></svg>
<div class="a" style="left:86px;top:725px;width:19px;height:1px;background:repeating-linear-gradient(90deg,#8a8a8a 0 1px,transparent 1px 3px)"></div>
<svg class="a" style="left:88px;top:733px" width="15" height="14" viewBox="0 0 15 14"><rect x="0.5" y="0.5" width="8" height="6" fill="none" stroke="#3ea6dc" stroke-width="1.2"/><rect x="2.5" y="2.5" width="4" height="2" fill="#3ea6dc"/><rect x="10.5" y="0.5" width="4" height="6" fill="none" stroke="#9a9a9a" stroke-width="1"/><rect x="0.5" y="8.5" width="14" height="5" fill="none" stroke="#9a9a9a" stroke-width="1.2"/></svg>
<svg class="a" style="left:88px;top:757px" width="15" height="16" viewBox="0 0 15 16"><path d="M4 0V14M1 11L4 14.5L7 11" stroke="#a0a0a0" stroke-width="1.1" fill="none"/><text x="8" y="7.5" font-family="Liberation Sans" font-size="10" fill="#3ea6dc">a</text><text x="8" y="15.5" font-family="Liberation Sans" font-size="10" fill="#c070d0">z</text></svg>
<div class="a" style="left:86px;top:781px;width:19px;height:1px;background:repeating-linear-gradient(90deg,#8a8a8a 0 1px,transparent 1px 3px)"></div>
<svg class="a" style="left:88px;top:789px" width="15" height="15" viewBox="0 0 15 15"><path d="M1 14L6 9" stroke="#888" stroke-width="1.4"/><ellipse cx="9.5" cy="5.5" rx="5" ry="3.5" transform="rotate(-30 9.5 5.5)" fill="#c48bd8"/><circle cx="8.5" cy="6.5" r="1.5" fill="#888"/></svg>
<svg class="a" style="left:89px;top:815px" width="12" height="12" viewBox="0 0 12 12"><path d="M1 1L11 11M11 1L1 11" stroke="#f05050" stroke-width="2.4"/></svg>
<div class="a t " style="left:89px;top:835.91px;font:bold 17px 'Liberation Sans';line-height:20.4px;color:#3ea6dc;letter-spacing:0.000px;">?</div>
<svg class="a" style="left:119px;top:630px" width="14" height="14" viewBox="0 0 14 14"><path d="M7 0L13.5 6.5H9.5V13H4.5V6.5H0.5z" fill="#8c8c8c"/></svg>
<svg class="a" style="left:119px;top:655px" width="14" height="14" viewBox="0 0 14 14"><path d="M7 14L13.5 7.5H9.5V1H4.5V7.5H0.5z" fill="#8c8c8c"/></svg>
<svg class="a" style="left:118px;top:680px" width="16" height="15" viewBox="0 0 16 15"><path d="M1 1.5H14M1 13.5H14" stroke="#9a9a9a" stroke-width="1.2"/><path d="M5 5H13Q15 5 15 7.5Q15 9.5 13 9.5H7" stroke="#3ea6dc" stroke-width="1.3" fill="none"/><path d="M3 5H4.5M1 9.5H5" stroke="#3ea6dc" stroke-width="1.3"/><path d="M8 7.5L6 9.5L8 11.5z" fill="#3ea6dc"/><path d="M11 3L13 5L11 7z" fill="#3ea6dc"/></svg>
<svg class="a" style="left:118px;top:705px" width="15" height="14" viewBox="0 0 15 14"><rect x="0.5" y="2.5" width="13" height="11" fill="#484848" stroke="#9a9a9a" stroke-width="1.2"/><path d="M10 0V7M7 5L10 9L13 5" stroke="#c070d8" stroke-width="2" fill="#c070d8"/></svg>
<svg class="a" style="left:118px;top:730px" width="16" height="14" viewBox="0 0 16 14"><rect x="3" y="0" width="10" height="3" fill="#aaa"/><rect x="0" y="3" width="16" height="6" rx="1" fill="#3ea6dc"/><rect x="3.5" y="7" width="9" height="7" fill="#bbb"/><rect x="5.5" y="9" width="5" height="1" fill="#555"/><rect x="5.5" y="11" width="5" height="1" fill="#555"/></svg>
<svg class="a" style="left:119px;top:754px" width="14" height="15" viewBox="0 0 14 15"><rect x="0" y="2" width="14" height="2" fill="#3ea6dc"/><rect x="5" y="0" width="4" height="2" fill="#3ea6dc"/><path d="M1.5 5H12.5L11.5 15H2.5z" fill="#3ea6dc"/><path d="M4.5 6.5V13.5M7 6.5V13.5M9.5 6.5V13.5" stroke="#2a6a90" stroke-width="0.9"/></svg>
<div class="a" style="left:57px;top:863px;width:1440px;height:1px;background:#35383a"></div>
<div class="a" style="left:57px;top:864px;width:1440px;height:1px;background:#666666"></div>
<div class="a" style="left:57px;top:865px;width:1440px;height:23px;background:#4b4f52"></div>
<div class="a" style="left:57px;top:887px;width:1440px;height:1px;background:#3e4143"></div>
<svg class="a" style="left:95px;top:870px" width="11" height="13" viewBox="0 0 11 13"><path d="M0 0L11 6.5L0 13z" fill="#1dbb5d"/></svg>
<div class="a t " style="left:111px;top:868.62px;font:13.5px 'Liberation Sans';line-height:16.2px;color:#c8c8c8;letter-spacing:-0.295px;">4: Run</div>
<div class="a" style="left:159px;top:866px;width:89px;height:20px;background:#44474a;border:1px solid #393c3e"></div>
<svg class="a" style="left:170px;top:868px" width="16" height="16" viewBox="0 0 16 16"><path d="M2 1.3L4 3.4M6.2 0.9V3M10.2 1.3L8.2 3.4M2 14.7L4 12.6M6.2 15.1V13M10.2 14.7L8.2 12.6" stroke="#b4b4b4" stroke-width="1.1"/><path d="M11.4 2.9Q6 2.4 3 4Q0.8 5.8 0.8 8Q0.8 10.3 3 12Q6 13.6 11.4 13.1Q8.4 10.8 8.4 8Q8.4 5.2 11.4 2.9z" fill="#00c462"/><path d="M9.3 5.2Q12.4 6.6 12.9 8Q12.4 9.4 9.3 10.8Q8.7 8 9.3 5.2z" fill="#b8b8b8"/><path d="M12.3 5.6Q12.9 4.3 15 4.3M12.3 10.4Q12.9 11.7 15 11.7" fill="none" stroke="#b4b4b4" stroke-width="1.1"/></svg>
<div class="a t " style="left:188.3px;top:868.62px;font:13.5px 'Liberation Sans';line-height:16.2px;color:#c8c8c8;letter-spacing:-0.113px;">5: Debug</div>
<svg class="a" style="left:263px;top:868px" width="15" height="15" viewBox="0 0 15 15"><circle cx="4" cy="3.5" r="3" fill="#eee" stroke="#777" stroke-width="0.8"/><rect x="2.3" y="3" width="3.4" height="1" fill="#555"/><circle cx="9" cy="6" r="3.6" fill="#aaa"/><circle cx="9" cy="8" r="3" fill="#f5c080"/><rect x="5" y="11" width="8" height="3.5" fill="#3ea6dc"/></svg>
<div class="a t " style="left:281px;top:868.62px;font:13.5px 'Liberation Sans';line-height:16.2px;color:#c8c8c8;letter-spacing:-0.460px;">6: TODO</div>
<div class="a" style="left:111px;top:883px;width:7px;height:1px;background:#c8c8c8"></div>
<div class="a" style="left:188px;top:883px;width:7px;height:1px;background:#c8c8c8"></div>
<div class="a" style="left:281px;top:883px;width:7px;height:1px;background:#c8c8c8"></div>
<svg class="a" style="left:1390px;top:870px" width="13" height="12" viewBox="0 0 13 12"><path d="M1 0.5H12Q12.5 0.5 12.5 1V8Q12.5 8.5 12 8.5H8L6 11.5V8.5H1Q0.5 8.5 0.5 8V1Q0.5 0.5 1 0.5z" fill="#7a7d7f"/></svg>
<div class="a t " style="left:1408.6px;top:868.19px;font:13px 'Liberation Sans';line-height:15.6px;color:#c8c8c8;letter-spacing:-0.506px;">Event Log</div>
<div class="a" style="left:57px;top:888px;width:1440px;height:21px;background:#4b4f52"></div>
<div class="a" style="left:62px;top:892px;width:14px;height:12px;border:1px solid #aaa;background:#3c3f41"></div>
<div class="a" style="left:62px;top:905px;width:14px;height:1px;background:#666"></div>
<div class="a t " style="left:87.9px;top:891.54px;font:12px 'Liberation Sans';line-height:14.4px;color:#c8c8c8;letter-spacing:0.130px;">All files are up-to-date (3 minutes ago)</div>
<svg class="a" style="left:1062px;top:892px" width="14" height="14" viewBox="0 0 14 14"><path d="M7 1.5V4.5" stroke="#999" stroke-width="1.1" transform="rotate(0 7 7)"/><path d="M7 1.5V4.5" stroke="#999" stroke-width="1.1" transform="rotate(30 7 7)"/><path d="M7 1.5V4.5" stroke="#999" stroke-width="1.1" transform="rotate(60 7 7)"/><path d="M7 1.5V4.5" stroke="#999" stroke-width="1.1" transform="rotate(90 7 7)"/><path d="M7 1.5V4.5" stroke="#999" stroke-width="1.1" transform="rotate(120 7 7)"/><path d="M7 1.5V4.5" stroke="#999" stroke-width="1.1" transform="rotate(150 7 7)"/><path d="M7 1.5V4.5" stroke="#999" stroke-width="1.1" transform="rotate(180 7 7)"/><path d="M7 1.5V4.5" stroke="#999" stroke-width="1.1" transform="rotate(210 7 7)"/><path d="M7 1.5V4.5" stroke="#999" stroke-width="1.1" transform="rotate(240 7 7)"/><path d="M7 1.5V4.5" stroke="#999" stroke-width="1.1" transform="rotate(270 7 7)"/><path d="M7 1.5V4.5" stroke="#999" stroke-width="1.1" transform="rotate(300 7 7)"/><path d="M7 1.5V4.5" stroke="#999" stroke-width="1.1" transform="rotate(330 7 7)"/></svg>
<div class="a t " style="left:1118px;top:891.64px;font:12px 'Liberation Sans';line-height:14.4px;color:#c8c8c8;letter-spacing:0.259px;">390:19</div>
<div class="a t " style="left:1197px;top:891.64px;font:12px 'Liberation Sans';line-height:14.4px;color:#c8c8c8;letter-spacing:-0.004px;">LF</div>
<svg class="a" style="left:1229px;top:893px" width="6" height="10" viewBox="0 0 6 10"><path d="M0 4L3 0.5L6 4zM0 6L3 9.5L6 6z" fill="#b0b0b0"/></svg>
<div class="a t " style="left:1244px;top:891.64px;font:12px 'Liberation Sans';line-height:14.4px;color:#c8c8c8;letter-spacing:0.001px;">UTF-8</div>
<svg class="a" style="left:1329px;top:893px" width="6" height="10" viewBox="0 0 6 10"><path d="M0 4L3 0.5L6 4zM0 6L3 9.5L6 6z" fill="#b0b0b0"/></svg>
<svg class="a" style="left:1346px;top:892px" width="12" height="12" viewBox="0 0 12 12"><path d="M1.5 6V3.5A2.5 2.5 0 0 1 6.5 3.5" fill="none" stroke="#aaa" stroke-width="1.1"/><rect x="4" y="6" width="7.5" height="5.5" fill="#aaa"/><rect x="7" y="7.5" width="1.5" height="2.5" fill="#4b4f52"/></svg>
<svg class="a" style="left:1369px;top:890px" width="14" height="16" viewBox="0 0 14 16"><ellipse cx="7" cy="4" rx="5.5" ry="3" fill="none" stroke="#aaa" stroke-width="1.1"/><path d="M1 5H13" stroke="#aaa" stroke-width="1.1"/><rect x="3" y="6" width="8" height="6" rx="3" fill="none" stroke="#aaa" stroke-width="1.1"/><path d="M4.5 10H9.5M2 14.5H12" stroke="#aaa" stroke-width="1.1"/></svg>
<div class="a" style="left:1400px;top:890px;width:36px;height:17px;background:#5f6265"></div>
<div class="a" style="left:1436px;top:890px;width:18px;height:17px;background:#55585a"></div>
<div class="a t " style="left:1408.6px;top:891.17px;font:12.5px 'Liberation Sans';line-height:15.0px;color:#d0d0d0;letter-spacing:-0.264px;">258M of 666M</div>
</body></html>
